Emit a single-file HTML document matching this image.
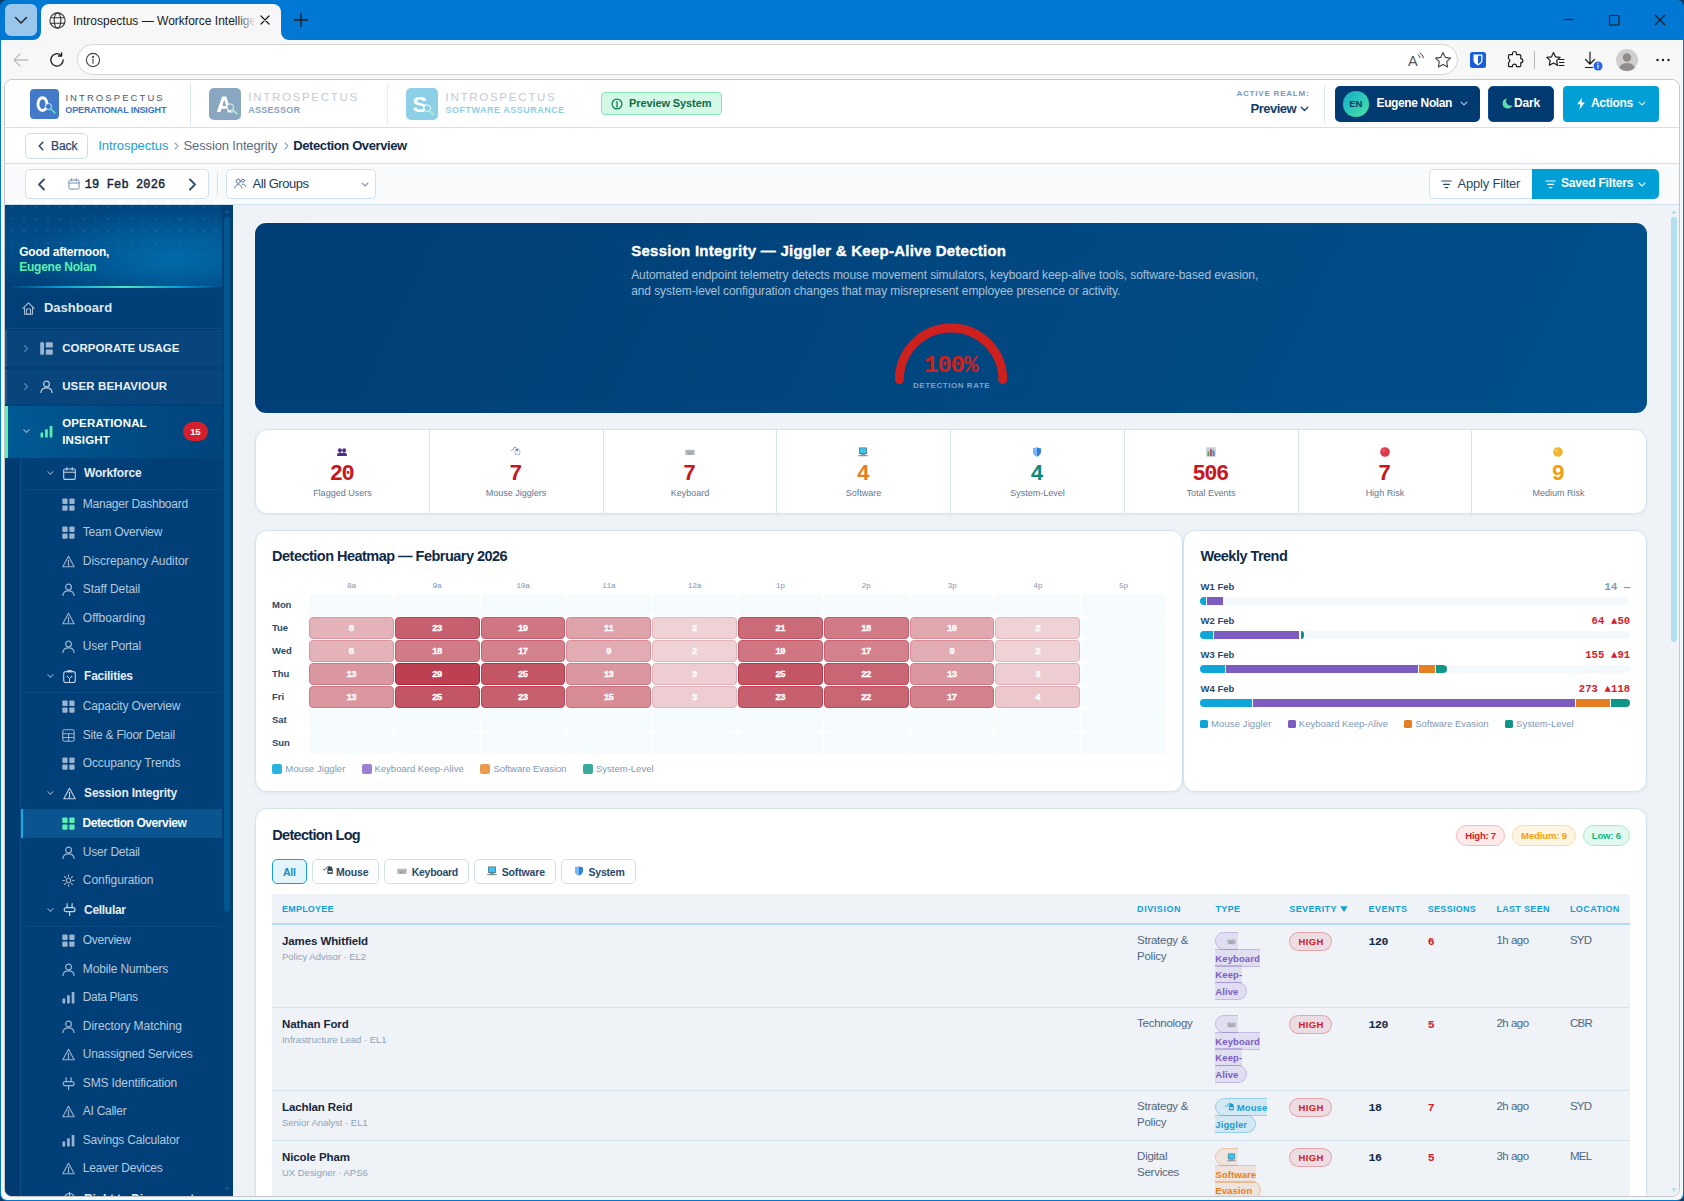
<!DOCTYPE html>
<html><head><meta charset="utf-8"><title>Introspectus</title>
<style>
*{box-sizing:border-box;margin:0;padding:0}
html,body{width:1684px;height:1201px;overflow:hidden}
body{font-family:"Liberation Sans",sans-serif;background:#0b3d68;position:relative;color:#1f3a56;font-size:13px}
.mono{font-family:"Liberation Mono",monospace}
.abs{position:absolute}
svg{display:block}
/* browser chrome */
#titlebar{position:absolute;left:0;top:0;width:1684px;height:1201px;background:#0078d4;border-radius:7px}
#toolbar{position:absolute;left:1px;top:40px;width:1682px;height:1160px;background:#f7f7f7;border-radius:0 0 6px 6px}
#tab{position:absolute;left:41px;top:4px;width:240px;height:36px;background:#f7f7f7;border-radius:8px 8px 0 0}
#tabdrop{position:absolute;left:5px;top:4px;width:32px;height:32px;background:#99c7ec;border-radius:6px}
#url{position:absolute;left:77px;top:44px;width:1381px;height:31px;border-radius:16px;background:#fff;border:1px solid #d4d4d4}
#page{position:absolute;left:4px;top:79px;width:1676px;height:1118px;background:#eff3f8;border-radius:8px;border:1px solid #c4c7ca;overflow:hidden}
/* inside page: #pg uses screen coords */
#pg{position:absolute;left:-5px;top:-80px;width:1684px;height:1201px}
#hdr{position:absolute;left:5px;top:80px;width:1674px;height:48px;background:#fff;border-bottom:1px solid #d2e1ee}
#crumb{position:absolute;left:5px;top:128px;width:1674px;height:36px;background:#fff;border-bottom:1px solid #d2e1ee}
#filt{position:absolute;left:5px;top:164px;width:1674px;height:41px;background:#f8fafc;border-bottom:1px solid #d2e1ee}
#side{position:absolute;left:5px;top:205px;width:228px;height:991px;background:#003f77;overflow:hidden}
#main{position:absolute;left:233px;top:205px;width:1446px;height:991px;background:#eff3f8;overflow:hidden}

.t{position:absolute;white-space:nowrap;line-height:1}
.b{font-weight:700}
.tb{font-size:9.500px;font-weight:700;line-height:16.500px;letter-spacing:.1px}
.tb span{padding:2.600px 7.500px 2.600px 0;border-radius:9px;-webkit-box-decoration-break:slice;box-decoration-break:slice}
.tb i.e{display:inline-block;padding-left:10.700px;padding-right:1.900px}.tb i.m{padding-left:8.500px;padding-right:.2px}
</style></head><body>

<div id="titlebar"></div>
<div id="toolbar"></div>
<div id="tabdrop"><svg width="32" height="32" viewBox="0 0 32 32"><path d="M10.5 13.5 L16 19 L21.5 13.5" fill="none" stroke="#1b1b1b" stroke-width="1.4" stroke-linecap="round" stroke-linejoin="round"/></svg></div>
<div id="tab">
 <svg class="abs" style="left:8px;top:8px" width="17" height="17" viewBox="0 0 17 17" fill="none" stroke="#333" stroke-width="1.1"><circle cx="8.5" cy="8.5" r="7.6"/><ellipse cx="8.5" cy="8.5" rx="3.3" ry="7.6"/><path d="M1.5 5.8h14M1.5 11.2h14"/></svg>
 <div class="abs" id="tabtitle" style="left:32px;top:8px;width:186px;height:20px;overflow:hidden;white-space:nowrap;font-size:12px;color:#1b1b1b;line-height:18px">Introspectus — Workforce Intelligence</div>
 <div class="abs" style="left:196px;top:6px;width:22px;height:24px;background:linear-gradient(90deg,rgba(247,247,247,0),#f7f7f7 85%)"></div>
 <svg class="abs" style="left:219px;top:11px" width="10" height="10" viewBox="0 0 10 10"><path d="M1 1L9 9M9 1L1 9" stroke="#1b1b1b" stroke-width="1.2" stroke-linecap="round"/></svg>
</div>
<svg class="abs" style="left:-8px;top:32px;left:33px" width="8" height="8" viewBox="0 0 8 8"><path d="M8 0V8H0A8 8 0 0 0 8 0Z" fill="#f7f7f7"/></svg>
<svg class="abs" style="left:281px;top:32px" width="8" height="8" viewBox="0 0 8 8"><path d="M0 0V8H8A8 8 0 0 1 0 0Z" fill="#f7f7f7"/></svg>
<svg class="abs" style="left:293px;top:12px" width="16" height="16" viewBox="0 0 16 16"><path d="M8 1.5V14.5M1.5 8H14.5" stroke="#1b1b1b" stroke-width="1.3" stroke-linecap="round"/></svg>
<!-- window controls -->
<svg class="abs" style="left:1560px;top:10px" width="110" height="20" viewBox="0 0 110 20" fill="none" stroke="#1b1b1b" stroke-width="1.1"><path d="M3.5 9.5H13.5"/><rect x="49.5" y="5.5" width="9.5" height="9.5" rx="1"/><path d="M95 5L105 15M105 5L95 15"/></svg>
<!-- toolbar icons -->
<svg class="abs" style="left:12px;top:52px" width="18" height="16" viewBox="0 0 18 16" fill="none" stroke="#bdbdbd" stroke-width="1.3" stroke-linecap="round" stroke-linejoin="round"><path d="M16 8H2M8 2L2 8l6 6"/></svg>
<svg class="abs" style="left:48px;top:51px" width="18" height="18" viewBox="0 0 18 18" fill="none" stroke="#1b1b1b" stroke-width="1.3" stroke-linecap="round" stroke-linejoin="round"><path d="M15.2 9a6.2 6.2 0 1 1-2.2-4.8"/><path d="M13.6 1.8v3.2h-3.2" /></svg>
<div id="url">
 <svg class="abs" style="left:7px;top:7px" width="16" height="16" viewBox="0 0 16 16" fill="none" stroke="#444" stroke-width="1.1"><circle cx="8" cy="8" r="6.6"/><path d="M8 7.2v4" stroke-linecap="round"/><circle cx="8" cy="4.9" r=".5" fill="#444"/></svg>
 <div class="abs" style="left:1330px;top:6px;font-size:14.500px;color:#555;line-height:20px">A</div>
 <svg class="abs" style="left:1338.500px;top:7px" width="8" height="10" viewBox="0 0 8 10" fill="none" stroke="#444" stroke-width="1" stroke-linecap="round"><path d="M1 2.5a4 4 0 0 1 2 3"/><path d="M3 .8a7 7 0 0 1 3.5 5"/></svg>
 <svg class="abs" style="left:1356px;top:6px" width="18" height="18" viewBox="0 0 18 18" fill="none" stroke="#444" stroke-width="1.1" stroke-linejoin="round"><path d="M9 1.6l2.3 4.8 5.2.7-3.8 3.6.9 5.2L9 13.4l-4.6 2.5.9-5.2L1.500 7.100l5.200-.7z"/></svg>
</div>
<svg class="abs" style="left:1470px;top:52px" width="16" height="16" viewBox="0 0 16 16"><rect width="16" height="16" rx="2.5" fill="#175ddc"/><path d="M3.500 2.500h9v5.800c0 2.500-2.600 4.300-4.500 5.100-1.900-.8-4.500-2.600-4.500-5.100z" fill="#fff"/><path d="M8 3.800h3.200v4.500c0 1.600-1.700 2.900-3.200 3.600z" fill="#175ddc"/></svg>
<svg class="abs" style="left:1505px;top:50px" width="20" height="20" viewBox="0 0 20 20" fill="none" stroke="#1b1b1b" stroke-width="1.2" stroke-linejoin="round"><path d="M7.500 3.500a2 2 0 0 1 4 0v1.200h3.300a1 1 0 0 1 1 1v3a2 2 0 0 1 0 4v3a1 1 0 0 1-1 1h-3.300v-.6a2 2 0 0 0-4 0v.6H4.500a1 1 0 0 1-1-1v-3.200a2 2 0 0 0 0-3.800V5.700a1 1 0 0 1 1-1h3z"/></svg>
<div class="abs" style="left:1534px;top:51px;width:1px;height:18px;background:#b8b8b8"></div>
<svg class="abs" style="left:1545px;top:50px" width="22" height="20" viewBox="0 0 22 20" fill="none" stroke="#1b1b1b" stroke-width="1.2" stroke-linejoin="round" stroke-linecap="round"><path d="M8.500 2.500l2 4.300 4.600.6-3.400 3.200.8 4.700-4-2.300-4.100 2.300.8-4.700L1.800 7.400l4.700-.6z"/><path d="M14 9.500h5M14.500 12.500h4.500M14 15.500h5" stroke-width="1.1"/></svg>
<svg class="abs" style="left:1582px;top:50px" width="24" height="22" viewBox="0 0 24 22" fill="none" stroke="#1b1b1b" stroke-width="1.2" stroke-linecap="round" stroke-linejoin="round"><path d="M8 2v12M3.500 9.500L8 14l4.500-4.500M3.500 17.500h7"/><circle cx="16" cy="16" r="4.500" fill="#2563eb" stroke="none"/><path d="M16 15v3" stroke="#fff" stroke-width="1.2"/><circle cx="16" cy="13.300" r=".7" fill="#fff" stroke="none"/></svg>
<svg class="abs" style="left:1616px;top:49px" width="22" height="22" viewBox="0 0 22 22"><defs><clipPath id="pc"><circle cx="11" cy="11" r="11"/></clipPath></defs><circle cx="11" cy="11" r="11" fill="#d0cecc"/><g clip-path="url(#pc)" fill="#8f8c89"><circle cx="11" cy="8.500" r="4.200"/><ellipse cx="11" cy="20" rx="8" ry="6"/></g></svg>
<svg class="abs" style="left:1655px;top:58px" width="16" height="4" viewBox="0 0 16 4" fill="#1b1b1b"><circle cx="2.500" cy="2" r="1.200"/><circle cx="8" cy="2" r="1.200"/><circle cx="13.500" cy="2" r="1.200"/></svg>
<div id="page"><div id="pg">
<div id="hdr">
<!--HDR-->
</div>
<div id="crumb">
<!--CRUMB-->
</div>
<div id="filt">
<!--FILT-->
</div>
<div id="side">
<!--SIDE-->
</div>
<div id="main">
<!--MAIN-->
</div>
<!--HDRC-->

<!-- logo 1 -->
<div class="abs" style="left:29.5px;top:89px;width:29.5px;height:29.5px;border-radius:4px;background:#4479c9"></div>
<svg class="abs" style="left:29.5px;top:89px" width="29.5" height="29.5" viewBox="0 0 30 30" fill="none"><ellipse cx="12.700" cy="15.400" rx="4.600" ry="6.500" stroke="#fff" stroke-width="2.900"/><circle cx="18.800" cy="17.800" r="3.100" fill="#4479c9" stroke="#e8eef8" stroke-width="1"/><path d="M21.200 20.200L25.300 24.200" stroke="#4fe3a8" stroke-width="1.800" stroke-linecap="round"/></svg>
<div class="t" style="left:65.4px;top:93.3px;font-size:9.500px;letter-spacing:2.080px;color:#4a5a74">INTROSPECTUS</div>
<div class="t b" style="left:65.3px;top:105.8px;font-size:9px;letter-spacing:-0.14px;color:#3a74c8">OPERATIONAL INSIGHT</div>
<div class="abs" style="left:190px;top:83px;width:1px;height:43px;background:#dbe7f1"></div>
<!-- logo 2 -->
<div class="abs" style="left:209px;top:87.500px;width:32px;height:32px;border-radius:5px;background:#8aa7c2"></div>
<svg class="abs" style="left:209px;top:87.500px" width="32" height="32" viewBox="0 0 32 32" fill="none"><path d="M7.800 24L13.200 8.500h4L22.600 24h-3.700l-1-3.300h-5.500l-1 3.300zM13.300 17.900h3.800l-1.900-6.300z" fill="#fff"/><circle cx="21.300" cy="19.200" r="3.300" fill="#8aa7c2" stroke="#eef3f8" stroke-width="1"/><path d="M18.500 24h5.500" stroke="#eef3f8" stroke-width="1"/><path d="M23.900 21.800L28 25.800" stroke="#a5efd0" stroke-width="1.800" stroke-linecap="round"/></svg>
<div class="t" style="left:248.300px;top:92.200px;font-size:11.500px;letter-spacing:1.700px;color:#c3cad7">INTROSPECTUS</div>
<div class="t b" style="left:248.300px;top:105.500px;font-size:9px;letter-spacing:.25px;color:#86a3c0">ASSESSOR</div>
<div class="abs" style="left:387px;top:83px;width:1px;height:43px;background:#e6eef5"></div>
<!-- logo 3 -->
<div class="abs" style="left:406px;top:87.500px;width:32px;height:32px;border-radius:5px;background:#8ecfe8"></div>
<svg class="abs" style="left:406px;top:87.500px" width="32" height="32" viewBox="0 0 32 32" fill="none"><text x="6.500" y="24" font-family="Liberation Sans" font-weight="700" font-size="22" fill="#fff">S</text><circle cx="21.300" cy="20.200" r="3.300" fill="#8ecfe8" stroke="#f2fafd" stroke-width="1"/><path d="M23.900 22.800L27.500 26.300" stroke="#a5efd0" stroke-width="1.800" stroke-linecap="round"/></svg>
<div class="t" style="left:445.600px;top:92.200px;font-size:11.500px;letter-spacing:1.720px;color:#c3cad7">INTROSPECTUS</div>
<div class="t b" style="left:445.600px;top:105.800px;font-size:9px;letter-spacing:.5px;color:#8ecfe8">SOFTWARE ASSURANCE</div>
<!-- preview badge -->
<div class="abs" style="left:601px;top:92px;width:121px;height:23px;border-radius:4px;background:#d3f8e6;border:1px solid #86e5b9"></div>
<svg class="abs" style="left:611px;top:97.500px" width="12" height="12" viewBox="0 0 12 12" fill="none" stroke="#0e7a50" stroke-width="1.200"><circle cx="6" cy="6" r="4.900"/><path d="M6 3.500v3.500" stroke-linecap="round"/><circle cx="6" cy="8.600" r=".4" fill="#0e7a50"/></svg>
<div class="t b" style="left:629px;top:98px;font-size:11px;letter-spacing:-.1px;color:#0e6b47">Preview System</div>
<!-- realm -->
<div class="t b" style="right:374.500px;top:89.500px;font-size:8px;letter-spacing:.8px;color:#7d99b7">ACTIVE REALM:</div>
<div class="t b" style="left:1250.500px;top:102px;font-size:13px;letter-spacing:-.5px;color:#123e6b">Preview</div>
<svg class="abs" style="left:1300px;top:105.500px" width="9" height="6" viewBox="0 0 9 6" fill="none" stroke="#123e6b" stroke-width="1.300" stroke-linecap="round" stroke-linejoin="round"><path d="M1.200 1.200L4.500 4.500L7.800 1.200"/></svg>
<div class="abs" style="left:1324px;top:85px;width:1px;height:38px;background:#dbe7f1"></div>
<!-- user btn -->
<div class="abs" style="left:1335px;top:86px;width:145px;height:36px;border-radius:5px;background:#003a70"></div>
<div class="abs" style="left:1343px;top:91px;width:25.600px;height:25.600px;border-radius:50%;background:linear-gradient(135deg,#12abc9,#49e6a6)"></div>
<div class="t b" style="left:1349.300px;top:99.200px;font-size:9.500px;letter-spacing:-.2px;color:#0d3a66">EN</div>
<div class="t b" style="left:1376.500px;top:97.300px;font-size:12px;letter-spacing:-.37px;color:#fff">Eugene Nolan</div>
<svg class="abs" style="left:1459.500px;top:100.500px" width="8" height="5.300" viewBox="0 0 9 6" fill="none" stroke="#b9cbe0" stroke-width="1.200" stroke-linecap="round" stroke-linejoin="round"><path d="M1.200 1.200L4.500 4.500L7.800 1.200"/></svg>
<!-- dark btn -->
<div class="abs" style="left:1488px;top:86px;width:66px;height:36px;border-radius:5px;background:#003a70;border:1px solid #0c4d8c"></div>
<svg class="abs" style="left:1502px;top:98px" width="11" height="11" viewBox="0 0 11 11"><path d="M5 .6A5 5 0 1 0 10.400 7 4.300 4.300 0 0 1 5 .6Z" fill="#57e0a9"/></svg>
<div class="t b" style="left:1514px;top:97.300px;font-size:12px;letter-spacing:-.15px;color:#fff">Dark</div>
<!-- actions btn -->
<div class="abs" style="left:1563px;top:86px;width:96px;height:36px;border-radius:4px;background:#00a0d6"></div>
<svg class="abs" style="left:1576px;top:97px" width="10" height="13" viewBox="0 0 10 13"><path d="M6.300 .5L1.200 7.300h3.300L3.500 12.500 8.800 5.500H5.400z" fill="#fff"/></svg>
<div class="t b" style="left:1591px;top:97.300px;font-size:12px;letter-spacing:-.3px;color:#fff">Actions</div>
<svg class="abs" style="left:1637.500px;top:100.500px" width="8" height="5.300" viewBox="0 0 9 6" fill="none" stroke="#e6f5fb" stroke-width="1.200" stroke-linecap="round" stroke-linejoin="round"><path d="M1.200 1.200L4.500 4.500L7.800 1.200"/></svg>
<!--/HDRC-->
<!--CRUMBC-->
<div class="abs" style="left:25px;top:133px;width:62.500px;height:25.600px;border-radius:5px;background:#fff;border:1px solid #cfdcea"></div>
<svg class="abs" style="left:38px;top:141px" width="6" height="10" viewBox="0 0 6 10" fill="none" stroke="#2a4a6b" stroke-width="1.500" stroke-linecap="round" stroke-linejoin="round"><path d="M4.800 1.200L1.200 5L4.800 8.800"/></svg>
<div class="t" style="left:51px;top:139.800px;font-size:12px;letter-spacing:-.1px;color:#2a4a6b;-webkit-text-stroke:.25px #2a4a6b">Back</div>
<div class="t" style="left:98.300px;top:139px;font-size:13px;letter-spacing:-.06px;color:#1a9fd4">Introspectus</div>
<svg class="abs" style="left:174px;top:141.700px" width="5" height="8" viewBox="0 0 5 8" fill="none" stroke="#8ea3b8" stroke-width="1.100" stroke-linecap="round" stroke-linejoin="round"><path d="M1 1L4 4L1 7"/></svg>
<div class="t" style="left:183.600px;top:139px;font-size:13px;letter-spacing:-.14px;color:#5a6d83">Session Integrity</div>
<svg class="abs" style="left:283.500px;top:141.700px" width="5" height="8" viewBox="0 0 5 8" fill="none" stroke="#8ea3b8" stroke-width="1.100" stroke-linecap="round" stroke-linejoin="round"><path d="M1 1L4 4L1 7"/></svg>
<div class="t b" style="left:293.200px;top:139px;font-size:13px;letter-spacing:-.39px;color:#0f2a47">Detection Overview</div>
<!-- filter row -->
<div class="abs" style="left:25px;top:169px;width:183.500px;height:29.700px;border-radius:5px;background:#fff;border:1px solid #d2dfec"></div>
<svg class="abs" style="left:36.500px;top:177.500px" width="9" height="13" viewBox="0 0 9 13" fill="none" stroke="#33506e" stroke-width="1.900" stroke-linecap="round" stroke-linejoin="round"><path d="M7 1.500L2 6.500L7 11.500"/></svg>
<svg class="abs" style="left:67.800px;top:178px" width="12" height="12" viewBox="0 0 13 13" fill="none" stroke="#6a88a8" stroke-width="1" stroke-linejoin="round"><rect x="1" y="2.200" width="11" height="9.800" rx="1.300"/><path d="M1 5.400h11M4 .7v2.600M9 .7v2.600" stroke-linecap="round"/></svg>
<div class="t mono" style="left:84.800px;top:179px;font-size:12px;letter-spacing:.12px;color:#16273b;-webkit-text-stroke:.45px #16273b">19 Feb 2026</div>
<svg class="abs" style="left:187.500px;top:177.500px" width="9" height="13" viewBox="0 0 9 13" fill="none" stroke="#33506e" stroke-width="1.900" stroke-linecap="round" stroke-linejoin="round"><path d="M2 1.500L7 6.500L2 11.500"/></svg>
<div class="abs" style="left:217px;top:173px;width:1px;height:21.500px;background:#d2dfec"></div>
<div class="abs" style="left:226px;top:169px;width:149.500px;height:29.700px;border-radius:5px;background:#fff;border:1px solid #d2dfec"></div>
<svg class="abs" style="left:234px;top:178px" width="12" height="11" viewBox="0 0 12 11" fill="none" stroke="#5b7896" stroke-width="1" stroke-linecap="round"><circle cx="4.300" cy="3.300" r="2.100"/><path d="M.7 10.200c.2-2.300 1.700-3.500 3.600-3.500s3.400 1.200 3.600 3.500"/><circle cx="9" cy="2.700" r="1.500"/><path d="M8.200 6.200c1.800-.4 3.100.6 3.300 2.300"/></svg>
<div class="t" style="left:252.500px;top:176.800px;font-size:13px;letter-spacing:-.46px;color:#1f3a56">All Groups</div>
<svg class="abs" style="left:360.500px;top:181.500px" width="8" height="5" viewBox="0 0 8 5" fill="none" stroke="#7f97b0" stroke-width="1.100" stroke-linecap="round" stroke-linejoin="round"><path d="M1 1L4 4L7 1"/></svg>
<div class="abs" style="left:1428.500px;top:169px;width:104px;height:29.700px;border-radius:5px 0 0 5px;background:#fff;border:1px solid #d2dfec"></div>
<svg class="abs" style="left:1441px;top:180px" width="11" height="9" viewBox="0 0 11 9" fill="none" stroke="#2a4a6b" stroke-width="1.200" stroke-linecap="round"><path d="M.8 1h9.400M2.500 4.300h6M4.200 7.600h2.600"/></svg>
<div class="t" style="left:1457.500px;top:176.800px;font-size:13px;letter-spacing:-.19px;color:#2a4a6b">Apply Filter</div>
<div class="abs" style="left:1532px;top:169px;width:127px;height:29.700px;border-radius:0 5px 5px 0;background:#00a0d6"></div>
<svg class="abs" style="left:1545px;top:180px" width="11" height="9" viewBox="0 0 11 9" fill="none" stroke="#fff" stroke-width="1.200" stroke-linecap="round"><path d="M.8 1h9.400M2.500 4.300h6M4.200 7.600h2.600"/></svg>
<div class="t b" style="left:1561px;top:177.200px;font-size:12px;letter-spacing:-.2px;color:#fff">Saved Filters</div>
<svg class="abs" style="left:1638px;top:181.500px" width="8" height="5" viewBox="0 0 8 5" fill="none" stroke="#e6f5fb" stroke-width="1.100" stroke-linecap="round" stroke-linejoin="round"><path d="M1 1L4 4L7 1"/></svg>
<!--/CRUMBC-->
<!--SIDEC-->
<div class="abs" style="left:5px;top:205px;width:217px;height:82px;background:radial-gradient(ellipse 150px 55px at 78% 66%,rgba(0,108,170,.95) 0%,rgba(0,108,170,0) 100%),linear-gradient(180deg,#00447e 0%,#004d88 45%,#004a84 75%,#003f77 100%)"></div>
<div class="abs" style="left:5px;top:205px;width:217px;height:70px;background-image:radial-gradient(circle,rgba(120,200,230,.13) .8px,rgba(0,0,0,0) 1.200px);background-size:12px 12px;background-position:1px -4px;-webkit-mask-image:linear-gradient(180deg,#000 40%,transparent)"></div>
<div class="abs" style="left:222px;top:205px;width:11px;height:991px;background:#003f77"></div>
<div class="abs" style="left:224.300px;top:217px;width:5.700px;height:695px;border-radius:3px;background:#00578f"></div>
<svg class="abs" style="left:224px;top:209px" width="6" height="4" viewBox="0 0 6 4"><path d="M3 .3L5.800 3.800H.2z" fill="#0a5a94"/></svg>
<svg class="abs" style="left:224px;top:1186.500px" width="6" height="4" viewBox="0 0 6 4"><path d="M3 3.700L5.800 .2H.2z" fill="#0a5a94"/></svg>
<div class="t b" style="left:19.2px;top:246.3px;font-size:12px;letter-spacing:-0.22px;color:#fff">Good afternoon,</div>
<div class="t b" style="left:19.2px;top:261.3px;font-size:12px;letter-spacing:-0.23px;color:#5ef0b0">Eugene Nolan</div>
<div class="abs" style="left:8px;top:285.500px;width:213px;height:2px;background:linear-gradient(90deg,rgba(0,160,214,0) 0%,#00a0d6 25%,#4fe3c0 55%,#00a0d6 80%,rgba(0,160,214,0) 100%)"></div>
<svg class="abs" style="left:22.2px;top:302.1px" width="13" height="13" viewBox="0 0 13 13" fill="none" stroke="#a8bed6" stroke-width="1.100" stroke-linejoin="round" stroke-linecap="round"><path d="M.8 6.300L6.500 .9l5.700 5.400"/><path d="M2.500 5.500v6.700h8V5.500"/><rect x="4.500" y="7" width="4" height="5.200" rx=".8"/></svg>
<div class="t b" style="left:43.9px;top:301.3px;font-size:13px;letter-spacing:0.04px;color:#dfe9f3">Dashboard</div>
<div class="abs" style="left:5px;top:328px;width:217px;height:1px;background:#0d4c84"></div>
<div class="abs" style="left:5px;top:329.500px;width:217px;height:37px;background:#08457c"></div><div class="abs" style="left:5px;top:329.500px;width:2px;height:37px;background:#265788"></div>
<svg class="abs" style="left:24.3px;top:344.9px" width="4.2" height="7" viewBox="0 0 6 10" fill="none" stroke="#7f9cbc" stroke-width="1.500" stroke-linecap="round" stroke-linejoin="round"><path d="M1 1L5 5L1 9"/></svg>
<svg class="abs" style="left:40.0px;top:341.9px" width="13" height="13" viewBox="0 0 13 13" fill="#9bb3cf"><rect x=".2" y=".3" width="3.800" height="12.400" rx=".8"/><rect x="5.800" y=".3" width="7" height="5.200" rx=".8"/><rect x="5.800" y="7.500" width="7" height="5.200" rx=".8"/></svg>
<div class="t b" style="left:62.2px;top:343.3px;font-size:11.5px;letter-spacing:0.04px;color:#e9f0f8">CORPORATE USAGE</div>
<div class="abs" style="left:5px;top:368.500px;width:217px;height:35px;background:#08457c"></div><div class="abs" style="left:5px;top:368.500px;width:2px;height:35px;background:#265788"></div>
<svg class="abs" style="left:24.3px;top:382.5px" width="4.2" height="7" viewBox="0 0 6 10" fill="none" stroke="#7f9cbc" stroke-width="1.500" stroke-linecap="round" stroke-linejoin="round"><path d="M1 1L5 5L1 9"/></svg>
<svg class="abs" style="left:40.0px;top:379.5px" width="13" height="13" viewBox="0 0 13 13" fill="none" stroke="#b9cce0" stroke-width="1.200" stroke-linecap="round"><circle cx="6.500" cy="4" r="2.900"/><path d="M.9 12.600c.3-3.300 2.700-4.700 5.600-4.700s5.300 1.400 5.600 4.700"/></svg>
<div class="t b" style="left:62.2px;top:381.4px;font-size:11.5px;letter-spacing:0.13px;color:#e9f0f8">USER BEHAVIOUR</div>
<div class="abs" style="left:5px;top:405.800px;width:217px;height:52px;background:linear-gradient(90deg,#005a94 0%,#004c84 55%,#00447c 100%)"></div><div class="abs" style="left:5px;top:405.800px;width:3px;height:52px;background:#5cf0b0"></div>
<svg class="abs" style="left:23.0px;top:429.4px" width="7" height="4.2" viewBox="0 0 10 6" fill="none" stroke="#8fb0d0" stroke-width="1.500" stroke-linecap="round" stroke-linejoin="round"><path d="M1 1L5 5L9 1"/></svg>
<svg class="abs" style="left:40.0px;top:425.0px" width="13" height="13" viewBox="0 0 13 13" fill="#5cf0b0"><rect x=".5" y="7.500" width="2.700" height="5" rx=".4"/><rect x="5.100" y="4.300" width="2.700" height="8.200" rx=".4"/><rect x="9.700" y="1" width="2.700" height="11.500" rx=".4"/></svg>
<div class="t b" style="left:62.2px;top:418.4px;font-size:11.5px;letter-spacing:0.16px;color:#fff">OPERATIONAL</div>
<div class="t b" style="left:62.2px;top:435.4px;font-size:11.5px;letter-spacing:0.16px;color:#fff">INSIGHT</div>
<div class="abs" style="left:183px;top:422px;width:25px;height:18.700px;border-radius:10px;background:#d4202a"></div>
<div class="t b" style="left:190.2px;top:426.8px;font-size:9.5px;letter-spacing:-0.3px;color:#fff">15</div>
<div class="abs" style="left:5px;top:458px;width:15px;height:738px;background:#003b71"></div>
<div class="abs" style="left:19.500px;top:458px;width:1.500px;height:738px;background:#0a4f86"></div>
<svg class="abs" style="left:47.0px;top:471.4px" width="6.8" height="4.1" viewBox="0 0 10 6" fill="none" stroke="#7f9cbc" stroke-width="1.500" stroke-linecap="round" stroke-linejoin="round"><path d="M1 1L5 5L9 1"/></svg>
<svg class="abs" style="left:62.9px;top:467.0px" width="13" height="13" viewBox="0 0 13 13" fill="none" stroke="#c3d3e5" stroke-width="1.100" stroke-linejoin="round" stroke-linecap="round"><rect x=".7" y="2" width="11.600" height="10.400" rx="1.300"/><path d="M.7 5.300h11.600M3.800 .6v2.600M9.200 .6v2.600"/></svg>
<div class="t b" style="left:84.1px;top:467.2px;font-size:12px;letter-spacing:-0.205px;color:#e3edf7">Workforce</div>
<div class="abs" style="left:23px;top:489.4px;width:199px;height:1px;background:#0a4a82"></div>
<svg class="abs" style="left:61.7px;top:497.9px" width="13" height="13" viewBox="0 0 13 13" fill="#9bb3cf"><rect x=".3" y=".6" width="5.300" height="5.300" rx="1"/><rect x="7.300" y=".6" width="5.300" height="5.300" rx="1"/><rect x=".3" y="7.400" width="5.300" height="5.300" rx="1"/><rect x="7.300" y="7.400" width="5.300" height="5.300" rx="1"/></svg>
<div class="t" style="left:82.8px;top:498.2px;font-size:12px;letter-spacing:-0.255px;color:#b5c9de">Manager Dashboard</div>
<svg class="abs" style="left:61.7px;top:526.1px" width="13" height="13" viewBox="0 0 13 13" fill="#9bb3cf"><rect x=".3" y=".6" width="5.300" height="5.300" rx="1"/><rect x="7.300" y=".6" width="5.300" height="5.300" rx="1"/><rect x=".3" y="7.400" width="5.300" height="5.300" rx="1"/><rect x="7.300" y="7.400" width="5.300" height="5.300" rx="1"/></svg>
<div class="t" style="left:82.8px;top:526.4px;font-size:12px;letter-spacing:-0.255px;color:#b5c9de">Team Overview</div>
<svg class="abs" style="left:61.7px;top:554.8px" width="13" height="13" viewBox="0 0 13 13" fill="none" stroke="#9bb3cf" stroke-width="1.100" stroke-linejoin="round" stroke-linecap="round"><path d="M6.500 1.300L12.200 11.700H.8z"/><path d="M6.500 5.200v3.300"/><circle cx="6.500" cy="10" r=".35" fill="#9bb3cf"/></svg>
<div class="t" style="left:82.8px;top:555.1px;font-size:12px;letter-spacing:-0.05px;color:#b5c9de">Discrepancy Auditor</div>
<svg class="abs" style="left:61.7px;top:583.1px" width="13" height="13" viewBox="0 0 13 13" fill="none" stroke="#9bb3cf" stroke-width="1.200" stroke-linecap="round"><circle cx="6.500" cy="4" r="2.900"/><path d="M.9 12.600c.3-3.300 2.700-4.700 5.600-4.700s5.300 1.400 5.600 4.700"/></svg>
<div class="t" style="left:82.8px;top:583.4px;font-size:12px;letter-spacing:-0.094px;color:#b5c9de">Staff Detail</div>
<svg class="abs" style="left:61.7px;top:611.8px" width="13" height="13" viewBox="0 0 13 13" fill="none" stroke="#9bb3cf" stroke-width="1.100" stroke-linejoin="round" stroke-linecap="round"><path d="M6.500 1.300L12.200 11.700H.8z"/><path d="M6.500 5.200v3.300"/><circle cx="6.500" cy="10" r=".35" fill="#9bb3cf"/></svg>
<div class="t" style="left:82.8px;top:612.1px;font-size:12px;letter-spacing:0.0px;color:#b5c9de">Offboarding</div>
<svg class="abs" style="left:61.7px;top:640.1px" width="13" height="13" viewBox="0 0 13 13" fill="none" stroke="#9bb3cf" stroke-width="1.200" stroke-linecap="round"><circle cx="6.500" cy="4" r="2.900"/><path d="M.9 12.600c.3-3.300 2.700-4.700 5.600-4.700s5.300 1.400 5.600 4.700"/></svg>
<div class="t" style="left:82.8px;top:640.4px;font-size:12px;letter-spacing:-0.165px;color:#b5c9de">User Portal</div>
<svg class="abs" style="left:47.0px;top:674.3px" width="6.8" height="4.1" viewBox="0 0 10 6" fill="none" stroke="#7f9cbc" stroke-width="1.500" stroke-linecap="round" stroke-linejoin="round"><path d="M1 1L5 5L9 1"/></svg>
<svg class="abs" style="left:62.9px;top:669.7px" width="13" height="13" viewBox="0 0 13 13" fill="none" stroke="#c3d3e5" stroke-width="1.100" stroke-linejoin="round" stroke-linecap="round"><rect x=".7" y="1.600" width="11.600" height="11" rx="2"/><path d="M3.800 1.600L5 .6h3l1.200 1z"/><circle cx="4.400" cy="6.500" r=".8" fill="#c3d3e5" stroke="none"/><circle cx="8.600" cy="6.500" r=".8" fill="#c3d3e5" stroke="none"/><path d="M4.400 6.500L6.500 8.600L8.600 6.500M6.500 8.600v3" stroke-width=".9"/></svg>
<div class="t b" style="left:84.1px;top:670.1px;font-size:12px;letter-spacing:-0.269px;color:#e3edf7">Facilities</div>
<div class="abs" style="left:23px;top:692.3px;width:199px;height:1px;background:#0a4a82"></div>
<svg class="abs" style="left:61.7px;top:699.8px" width="13" height="13" viewBox="0 0 13 13" fill="#9bb3cf"><rect x=".3" y=".6" width="5.300" height="5.300" rx="1"/><rect x="7.300" y=".6" width="5.300" height="5.300" rx="1"/><rect x=".3" y="7.400" width="5.300" height="5.300" rx="1"/><rect x="7.300" y="7.400" width="5.300" height="5.300" rx="1"/></svg>
<div class="t" style="left:82.8px;top:700.1px;font-size:12px;letter-spacing:-0.147px;color:#b5c9de">Capacity Overview</div>
<svg class="abs" style="left:61.7px;top:728.8px" width="13" height="13" viewBox="0 0 13 13" fill="none" stroke="#9bb3cf" stroke-width="1.100" stroke-linejoin="round"><rect x=".8" y=".8" width="11.400" height="11.400" rx="1.600"/><path d="M.8 4.800h11.400M.8 8.500h11.400M6.500 4.800v7.400"/></svg>
<div class="t" style="left:82.8px;top:729.1px;font-size:12px;letter-spacing:-0.243px;color:#b5c9de">Site &amp; Floor Detail</div>
<svg class="abs" style="left:61.7px;top:757.1px" width="13" height="13" viewBox="0 0 13 13" fill="#9bb3cf"><rect x=".3" y=".6" width="5.300" height="5.300" rx="1"/><rect x="7.300" y=".6" width="5.300" height="5.300" rx="1"/><rect x=".3" y="7.400" width="5.300" height="5.300" rx="1"/><rect x="7.300" y="7.400" width="5.300" height="5.300" rx="1"/></svg>
<div class="t" style="left:82.8px;top:757.4px;font-size:12px;letter-spacing:-0.159px;color:#b5c9de">Occupancy Trends</div>
<svg class="abs" style="left:47.0px;top:791.3px" width="6.8" height="4.1" viewBox="0 0 10 6" fill="none" stroke="#7f9cbc" stroke-width="1.500" stroke-linecap="round" stroke-linejoin="round"><path d="M1 1L5 5L9 1"/></svg>
<svg class="abs" style="left:62.9px;top:786.9px" width="13" height="13" viewBox="0 0 13 13" fill="none" stroke="#c3d3e5" stroke-width="1.100" stroke-linejoin="round" stroke-linecap="round"><path d="M6.500 1.300L12.200 11.700H.8z"/><path d="M6.500 5.200v3.300"/><circle cx="6.500" cy="10" r=".35" fill="#c3d3e5"/></svg>
<div class="t b" style="left:84.1px;top:787.1px;font-size:12px;letter-spacing:-0.218px;color:#e3edf7">Session Integrity</div>
<div class="abs" style="left:23px;top:809.3px;width:199px;height:1px;background:#0a4a82"></div>
<div class="abs" style="left:20.700px;top:809.0px;width:201.300px;height:28.700px;background:#0a5590"></div><div class="abs" style="left:20.700px;top:809.0px;width:2.600px;height:28.700px;background:#1aa8e0"></div>
<svg class="abs" style="left:61.5px;top:817.1px" width="13" height="13" viewBox="0 0 13 13" fill="#5cf0b0"><rect x=".3" y=".6" width="5.300" height="5.300" rx="1"/><rect x="7.300" y=".6" width="5.300" height="5.300" rx="1"/><rect x=".3" y="7.400" width="5.300" height="5.300" rx="1"/><rect x="7.300" y="7.400" width="5.300" height="5.300" rx="1"/></svg>
<div class="t b" style="left:82.5px;top:817.4px;font-size:12px;letter-spacing:-0.41px;color:#fff">Detection Overview</div>
<svg class="abs" style="left:61.7px;top:845.8px" width="13" height="13" viewBox="0 0 13 13" fill="none" stroke="#9bb3cf" stroke-width="1.200" stroke-linecap="round"><circle cx="6.500" cy="4" r="2.900"/><path d="M.9 12.600c.3-3.300 2.700-4.700 5.600-4.700s5.300 1.400 5.600 4.700"/></svg>
<div class="t" style="left:82.8px;top:846.1px;font-size:12px;letter-spacing:-0.215px;color:#b5c9de">User Detail</div>
<svg class="abs" style="left:61.7px;top:874.1px" width="13" height="13" viewBox="0 0 13 13" fill="none" stroke="#9bb3cf" stroke-width="1.100" stroke-linecap="round"><circle cx="6.500" cy="6.500" r="2.200"/><path d="M6.500 .8v1.700M6.500 10.500v1.700M.8 6.500h1.700M10.500 6.500h1.700M2.500 2.500l1.200 1.200M9.300 9.300l1.200 1.200M2.500 10.500l1.200-1.200M9.300 3.700l1.200-1.200"/></svg>
<div class="t" style="left:82.8px;top:874.4px;font-size:12px;letter-spacing:-0.055px;color:#b5c9de">Configuration</div>
<svg class="abs" style="left:47.0px;top:908.3px" width="6.8" height="4.1" viewBox="0 0 10 6" fill="none" stroke="#7f9cbc" stroke-width="1.500" stroke-linecap="round" stroke-linejoin="round"><path d="M1 1L5 5L9 1"/></svg>
<svg class="abs" style="left:62.9px;top:902.9px" width="13" height="13" viewBox="0 0 13 13" fill="none" stroke="#c3d3e5" stroke-width="1.200" stroke-linecap="round" stroke-linejoin="round"><path d="M4.100 .7v4M9.100 .7v4"/><rect x="1.200" y="4.700" width="10.800" height="4" rx="2"/><path d="M6.600 8.700v4"/></svg>
<div class="t b" style="left:84.1px;top:904.1px;font-size:12px;letter-spacing:-0.309px;color:#e3edf7">Cellular</div>
<div class="abs" style="left:23px;top:926.3px;width:199px;height:1px;background:#0a4a82"></div>
<svg class="abs" style="left:61.7px;top:933.8px" width="13" height="13" viewBox="0 0 13 13" fill="#9bb3cf"><rect x=".3" y=".6" width="5.300" height="5.300" rx="1"/><rect x="7.300" y=".6" width="5.300" height="5.300" rx="1"/><rect x=".3" y="7.400" width="5.300" height="5.300" rx="1"/><rect x="7.300" y="7.400" width="5.300" height="5.300" rx="1"/></svg>
<div class="t" style="left:82.8px;top:934.1px;font-size:12px;letter-spacing:-0.269px;color:#b5c9de">Overview</div>
<svg class="abs" style="left:61.7px;top:962.8px" width="13" height="13" viewBox="0 0 13 13" fill="none" stroke="#9bb3cf" stroke-width="1.200" stroke-linecap="round"><circle cx="6.500" cy="4" r="2.900"/><path d="M.9 12.600c.3-3.300 2.700-4.700 5.600-4.700s5.300 1.400 5.600 4.700"/></svg>
<div class="t" style="left:82.8px;top:963.1px;font-size:12px;letter-spacing:-0.146px;color:#b5c9de">Mobile Numbers</div>
<svg class="abs" style="left:61.7px;top:991.1px" width="13" height="13" viewBox="0 0 13 13" fill="#9bb3cf"><rect x=".5" y="7.500" width="2.700" height="5" rx=".4"/><rect x="5.100" y="4.300" width="2.700" height="8.200" rx=".4"/><rect x="9.700" y="1" width="2.700" height="11.500" rx=".4"/></svg>
<div class="t" style="left:82.8px;top:991.4px;font-size:12px;letter-spacing:-0.379px;color:#b5c9de">Data Plans</div>
<svg class="abs" style="left:61.7px;top:1019.8px" width="13" height="13" viewBox="0 0 13 13" fill="none" stroke="#9bb3cf" stroke-width="1.200" stroke-linecap="round"><circle cx="6.500" cy="4" r="2.900"/><path d="M.9 12.600c.3-3.300 2.700-4.700 5.600-4.700s5.300 1.400 5.600 4.700"/></svg>
<div class="t" style="left:82.8px;top:1020.1px;font-size:12px;letter-spacing:-0.053px;color:#b5c9de">Directory Matching</div>
<svg class="abs" style="left:61.7px;top:1048.1px" width="13" height="13" viewBox="0 0 13 13" fill="none" stroke="#9bb3cf" stroke-width="1.100" stroke-linejoin="round" stroke-linecap="round"><path d="M6.500 1.300L12.200 11.700H.8z"/><path d="M6.500 5.200v3.300"/><circle cx="6.500" cy="10" r=".35" fill="#9bb3cf"/></svg>
<div class="t" style="left:82.8px;top:1048.4px;font-size:12px;letter-spacing:-0.159px;color:#b5c9de">Unassigned Services</div>
<svg class="abs" style="left:61.7px;top:1076.8px" width="13" height="13" viewBox="0 0 13 13" fill="none" stroke="#9bb3cf" stroke-width="1.200" stroke-linecap="round" stroke-linejoin="round"><path d="M4.100 .7v4M9.100 .7v4"/><rect x="1.200" y="4.700" width="10.800" height="4" rx="2"/><path d="M6.600 8.700v4"/></svg>
<div class="t" style="left:82.8px;top:1077.1px;font-size:12px;letter-spacing:-0.133px;color:#b5c9de">SMS Identification</div>
<svg class="abs" style="left:61.7px;top:1105.1px" width="13" height="13" viewBox="0 0 13 13" fill="none" stroke="#9bb3cf" stroke-width="1.100" stroke-linejoin="round" stroke-linecap="round"><path d="M6.500 1.300L12.200 11.700H.8z"/><path d="M6.500 5.200v3.300"/><circle cx="6.500" cy="10" r=".35" fill="#9bb3cf"/></svg>
<div class="t" style="left:82.8px;top:1105.4px;font-size:12px;letter-spacing:-0.272px;color:#b5c9de">AI Caller</div>
<svg class="abs" style="left:61.7px;top:1133.8px" width="13" height="13" viewBox="0 0 13 13" fill="#9bb3cf"><rect x=".5" y="7.500" width="2.700" height="5" rx=".4"/><rect x="5.100" y="4.300" width="2.700" height="8.200" rx=".4"/><rect x="9.700" y="1" width="2.700" height="11.500" rx=".4"/></svg>
<div class="t" style="left:82.8px;top:1134.1px;font-size:12px;letter-spacing:-0.186px;color:#b5c9de">Savings Calculator</div>
<svg class="abs" style="left:61.7px;top:1162.1px" width="13" height="13" viewBox="0 0 13 13" fill="none" stroke="#9bb3cf" stroke-width="1.100" stroke-linejoin="round" stroke-linecap="round"><path d="M6.500 1.300L12.200 11.700H.8z"/><path d="M6.500 5.200v3.300"/><circle cx="6.500" cy="10" r=".35" fill="#9bb3cf"/></svg>
<div class="t" style="left:82.8px;top:1162.4px;font-size:12px;letter-spacing:-0.216px;color:#b5c9de">Leaver Devices</div>
<svg class="abs" style="left:47.0px;top:1196.8px" width="6.8" height="4.1" viewBox="0 0 10 6" fill="none" stroke="#7f9cbc" stroke-width="1.500" stroke-linecap="round" stroke-linejoin="round"><path d="M1 1L5 5L9 1"/></svg>
<svg class="abs" style="left:62.9px;top:1192.4px" width="13" height="13" viewBox="0 0 13 13" fill="none" stroke="#c3d3e5" stroke-width="1.100" stroke-linecap="round"><circle cx="6.500" cy="6.800" r="5.300"/><path d="M6.500 .6v5"/></svg>
<div class="t b" style="left:84.1px;top:1192.6px;font-size:12px;letter-spacing:-0.17px;color:#e3edf7">Right to Disconnect</div>
<div class="abs" style="left:23px;top:1214.8px;width:199px;height:1px;background:#0a4a82"></div>
<!--/SIDEC-->
<!--MAINC-->
<div class="abs" style="left:1671.0px;top:217.0px;width:6.0px;height:425.0px;border-radius:3px;background:#b3dff0"></div>
<svg class="abs" style="left:1671px;top:209.500px" width="6" height="4" viewBox="0 0 6 4"><path d="M3 .2L5.900 3.800H.1z" fill="#b3dff0"/></svg>
<svg class="abs" style="left:1671px;top:1187.500px" width="6" height="4" viewBox="0 0 6 4"><path d="M3 3.800L5.900 .2H.1z" fill="#b3dff0"/></svg>
<div class="abs" style="left:255.0px;top:223.0px;width:1392.0px;height:190.0px;border-radius:11px;background:linear-gradient(115deg,#003e76 0%,#00467f 45%,#00508b 100%);box-shadow:0 0 0 1px rgba(255,255,255,.4)"></div>
<div class="t b" style="left:631.2px;top:243.2px;font-size:15px;letter-spacing:0.25px;color:#fff;-webkit-text-stroke:.35px #fff">Session Integrity — Jiggler &amp; Keep-Alive Detection</div>
<div class="t" style="left:631.2px;top:269.2px;font-size:12px;letter-spacing:-0.1px;color:#a9c0d8;">Automated endpoint telemetry detects mouse movement simulators, keyboard keep-alive tools, software-based evasion,</div>
<div class="t" style="left:631.2px;top:285.4px;font-size:12px;letter-spacing:-0.09px;color:#a9c0d8;">and system-level configuration changes that may misrepresent employee presence or activity.</div>
<svg class="abs" style="left:890px;top:318px" width="122" height="70" viewBox="0 0 122 70"><path d="M9.400 61.700A51.700 51.700 0 0 1 112.800 61.700" fill="none" stroke="#cf2020" stroke-width="8.800" stroke-linecap="round"/></svg>
<div class="t b mono" style="left:750.6px;width:400px;text-align:center;top:354.0px;font-size:24px;letter-spacing:-1.1px;color:#cf2020;">100%</div>
<div class="t b" style="left:751.6px;width:400px;text-align:center;top:381.6px;font-size:8px;letter-spacing:0.55px;color:#7fa0c2;">DETECTION RATE</div>
<div class="abs" style="left:255.0px;top:429.0px;width:1392.0px;height:84.5px;border-radius:12px;background:#fff;border:1px solid #d5e3ee;box-shadow:0 1px 3px rgba(20,60,100,.07)"></div>
<svg class="abs" style="left:337.1px;top:446.6px" width="10" height="10" viewBox="0 0 10 10"><g fill="#4b2d83"><circle cx="2.900" cy="3.200" r="2"/><circle cx="7.100" cy="3.200" r="2"/><path d="M0 9c0-2.500 1.200-3.600 2.900-3.600S5 6 5 6.500C5 6 5.400 5.400 7.100 5.400S10 6.500 10 9z"/></g></svg>
<div class="t b mono" style="left:142.2px;width:400px;text-align:center;top:464.2px;font-size:22px;letter-spacing:-1.5px;color:#c8161d;text-indent:-1.500px">20</div>
<div class="t" style="left:142.4px;width:400px;text-align:center;top:488.7px;font-size:9px;letter-spacing:0px;color:#5f7893;">Flagged Users</div>
<div class="abs" style="left:429.0px;top:430.0px;width:1.0px;height:82.5px;background:#d5e3ee"></div>
<svg class="abs" style="left:510.8px;top:446.0px" width="10" height="10" viewBox="0 0 10 10"><path d="M.5 4.500c1-.2 1.500-1.500 2.500-2.500s1.800-.8 2.300.2" fill="none" stroke="#3b4a5c" stroke-width=".7"/><path d="M4 5.200c0-1.700 1-2.400 2.400-2.400s2.400.7 2.400 2.400v3.300H4z" fill="#f4f6f8" stroke="#8a97a6" stroke-width=".6"/><rect x="5.300" y="3" width="1.600" height="2" fill="#2f6fc4"/></svg>
<div class="t b mono" style="left:315.9px;width:400px;text-align:center;top:464.2px;font-size:22px;letter-spacing:-1.5px;color:#c8161d;text-indent:-1.500px">7</div>
<div class="t" style="left:316.1px;width:400px;text-align:center;top:488.7px;font-size:9px;letter-spacing:0px;color:#5f7893;">Mouse Jigglers</div>
<div class="abs" style="left:603.0px;top:430.0px;width:1.0px;height:82.5px;background:#d5e3ee"></div>
<svg class="abs" style="left:684.6px;top:446.6px" width="10" height="10" viewBox="0 0 10 10"><rect x=".3" y="2.800" width="9.400" height="5.200" rx=".6" fill="#b9bdc3"/><path d="M1.300 4.200h7.400M1.300 5.400h7.400" stroke="#8f949b" stroke-width=".6" stroke-dasharray=".8 .5"/><path d="M2.800 6.800h4.400" stroke="#7d828a" stroke-width=".7"/></svg>
<div class="t b mono" style="left:489.7px;width:400px;text-align:center;top:464.2px;font-size:22px;letter-spacing:-1.5px;color:#c8161d;text-indent:-1.500px">7</div>
<div class="t" style="left:489.9px;width:400px;text-align:center;top:488.7px;font-size:9px;letter-spacing:0px;color:#5f7893;">Keyboard</div>
<div class="abs" style="left:776.0px;top:430.0px;width:1.0px;height:82.5px;background:#d5e3ee"></div>
<svg class="abs" style="left:858.3px;top:446.6px" width="10" height="10" viewBox="0 0 10 10"><rect x="1" y=".6" width="8" height="6.400" rx=".5" fill="#5b6670"/><rect x="1.600" y="1.200" width="6.800" height="5.200" fill="#3bc4f0"/><path d="M0 8.100h10l-.6 1.200H.6z" fill="#8a949e"/><rect x="3" y="7.200" width="4" height=".9" fill="#6d7781"/></svg>
<div class="t b mono" style="left:663.4px;width:400px;text-align:center;top:464.2px;font-size:22px;letter-spacing:-1.5px;color:#e67e22;text-indent:-1.500px">4</div>
<div class="t" style="left:663.6px;width:400px;text-align:center;top:488.7px;font-size:9px;letter-spacing:0px;color:#5f7893;">Software</div>
<div class="abs" style="left:950.0px;top:430.0px;width:1.0px;height:82.5px;background:#d5e3ee"></div>
<svg class="abs" style="left:1032.1px;top:446.6px" width="10" height="10" viewBox="0 0 10 10"><path d="M5 .4L9 1.600v3.200c0 2.500-1.900 4.200-4 4.800-2.100-.6-4-2.300-4-4.800V1.600z" fill="#2f7fe0"/><path d="M5 .4L1 1.600v3.200c0 2.500 1.900 4.200 4 4.800z" fill="#7db8f5"/></svg>
<div class="t b mono" style="left:837.2px;width:400px;text-align:center;top:464.2px;font-size:22px;letter-spacing:-1.5px;color:#0f8a7a;text-indent:-1.500px">4</div>
<div class="t" style="left:837.4px;width:400px;text-align:center;top:488.7px;font-size:9px;letter-spacing:0px;color:#5f7893;">System-Level</div>
<div class="abs" style="left:1124.0px;top:430.0px;width:1.0px;height:82.5px;background:#d5e3ee"></div>
<svg class="abs" style="left:1205.8px;top:446.6px" width="10" height="10" viewBox="0 0 10 10"><rect x=".3" y=".3" width="9.400" height="9.400" rx=".8" fill="#c9ced6"/><rect x="1.500" y="4.500" width="1.800" height="4.600" fill="#3fae5a"/><rect x="4.100" y="2.200" width="1.800" height="6.900" fill="#d33b4b"/><rect x="6.700" y="3.500" width="1.800" height="5.600" fill="#3b7fe0"/></svg>
<div class="t b mono" style="left:1010.9px;width:400px;text-align:center;top:464.2px;font-size:22px;letter-spacing:-1.5px;color:#c8161d;text-indent:-1.500px">506</div>
<div class="t" style="left:1011.1px;width:400px;text-align:center;top:488.7px;font-size:9px;letter-spacing:0px;color:#5f7893;">Total Events</div>
<div class="abs" style="left:1298.0px;top:430.0px;width:1.0px;height:82.5px;background:#d5e3ee"></div>
<svg class="abs" style="left:1379.6px;top:446.6px" width="10" height="10" viewBox="0 0 10 10"><circle cx="5" cy="5" r="4.800" fill="#e0394a"/><circle cx="3.600" cy="3.400" r="1.600" fill="#ee6b77" opacity=".6"/></svg>
<div class="t b mono" style="left:1184.7px;width:400px;text-align:center;top:464.2px;font-size:22px;letter-spacing:-1.5px;color:#c8161d;text-indent:-1.500px">7</div>
<div class="t" style="left:1184.9px;width:400px;text-align:center;top:488.7px;font-size:9px;letter-spacing:0px;color:#5f7893;">High Risk</div>
<div class="abs" style="left:1471.0px;top:430.0px;width:1.0px;height:82.5px;background:#d5e3ee"></div>
<svg class="abs" style="left:1553.3px;top:446.6px" width="10" height="10" viewBox="0 0 10 10"><circle cx="5" cy="5" r="4.800" fill="#f0b430"/><circle cx="3.600" cy="3.400" r="1.600" fill="#f9d678" opacity=".7"/></svg>
<div class="t b mono" style="left:1358.4px;width:400px;text-align:center;top:464.2px;font-size:22px;letter-spacing:-1.5px;color:#f59e0b;text-indent:-1.500px">9</div>
<div class="t" style="left:1358.6px;width:400px;text-align:center;top:488.7px;font-size:9px;letter-spacing:0px;color:#5f7893;">Medium Risk</div>
<div class="abs" style="left:255.0px;top:530.0px;width:928.0px;height:262.0px;border-radius:12px;background:#fff;border:1px solid #d5e3ee;box-shadow:0 1px 3px rgba(20,60,100,.07)"></div>
<div class="t b" style="left:272.1px;top:549.1px;font-size:14.5px;letter-spacing:-0.52px;color:#0f2a47;">Detection Heatmap — February 2026</div>
<div class="t mono" style="left:151.4px;width:400px;text-align:center;top:581.9px;font-size:8px;letter-spacing:-0.3px;color:#7d99b7;">8a</div>
<div class="t mono" style="left:237.1px;width:400px;text-align:center;top:581.9px;font-size:8px;letter-spacing:-0.3px;color:#7d99b7;">9a</div>
<div class="t mono" style="left:322.9px;width:400px;text-align:center;top:581.9px;font-size:8px;letter-spacing:-0.3px;color:#7d99b7;">10a</div>
<div class="t mono" style="left:408.7px;width:400px;text-align:center;top:581.9px;font-size:8px;letter-spacing:-0.3px;color:#7d99b7;">11a</div>
<div class="t mono" style="left:494.5px;width:400px;text-align:center;top:581.9px;font-size:8px;letter-spacing:-0.3px;color:#7d99b7;">12a</div>
<div class="t mono" style="left:580.3px;width:400px;text-align:center;top:581.9px;font-size:8px;letter-spacing:-0.3px;color:#7d99b7;">1p</div>
<div class="t mono" style="left:666.1px;width:400px;text-align:center;top:581.9px;font-size:8px;letter-spacing:-0.3px;color:#7d99b7;">2p</div>
<div class="t mono" style="left:751.9px;width:400px;text-align:center;top:581.9px;font-size:8px;letter-spacing:-0.3px;color:#7d99b7;">3p</div>
<div class="t mono" style="left:837.7px;width:400px;text-align:center;top:581.9px;font-size:8px;letter-spacing:-0.3px;color:#7d99b7;">4p</div>
<div class="t mono" style="left:923.5px;width:400px;text-align:center;top:581.9px;font-size:8px;letter-spacing:-0.3px;color:#7d99b7;">5p</div>
<div class="t b" style="left:272.1px;top:600.2px;font-size:9.5px;letter-spacing:-0.1px;color:#2a4a6b;">Mon</div>
<div class="abs" style="left:309.1px;top:594.0px;width:84.8px;height:22.0px;border-radius:4px;background:#f6fbfe"></div>
<div class="abs" style="left:394.8px;top:594.0px;width:84.8px;height:22.0px;border-radius:4px;background:#f6fbfe"></div>
<div class="abs" style="left:480.6px;top:594.0px;width:84.8px;height:22.0px;border-radius:4px;background:#f6fbfe"></div>
<div class="abs" style="left:566.4px;top:594.0px;width:84.8px;height:22.0px;border-radius:4px;background:#f6fbfe"></div>
<div class="abs" style="left:652.2px;top:594.0px;width:84.8px;height:22.0px;border-radius:4px;background:#f6fbfe"></div>
<div class="abs" style="left:738.0px;top:594.0px;width:84.8px;height:22.0px;border-radius:4px;background:#f6fbfe"></div>
<div class="abs" style="left:823.8px;top:594.0px;width:84.8px;height:22.0px;border-radius:4px;background:#f6fbfe"></div>
<div class="abs" style="left:909.6px;top:594.0px;width:84.8px;height:22.0px;border-radius:4px;background:#f6fbfe"></div>
<div class="abs" style="left:995.4px;top:594.0px;width:84.8px;height:22.0px;border-radius:4px;background:#f6fbfe"></div>
<div class="abs" style="left:1081.2px;top:594.0px;width:84.8px;height:22.0px;border-radius:4px;background:#f6fbfe"></div>
<div class="t b" style="left:272.1px;top:623.2px;font-size:9.5px;letter-spacing:-0.1px;color:#2a4a6b;">Tue</div>
<div class="abs" style="left:309.1px;top:617.0px;width:84.8px;height:22.0px;border-radius:4px;background:#e4b2b9;border:1px solid #da959e"></div>
<div class="t b mono" style="left:151.4px;width:400px;text-align:center;top:624.3px;font-size:9.5px;letter-spacing:-0.9px;color:#fff;text-indent:-.9px;-webkit-text-stroke:.3px #fff">8</div>
<div class="abs" style="left:394.8px;top:617.0px;width:84.8px;height:22.0px;border-radius:4px;background:#c7606e;border:1px solid #bd4354"></div>
<div class="t b mono" style="left:237.2px;width:400px;text-align:center;top:624.3px;font-size:9.5px;letter-spacing:-0.9px;color:#fff;text-indent:-.9px;-webkit-text-stroke:.3px #fff">23</div>
<div class="abs" style="left:480.6px;top:617.0px;width:84.8px;height:22.0px;border-radius:4px;background:#cf7682;border:1px solid #c55968"></div>
<div class="t b mono" style="left:323.0px;width:400px;text-align:center;top:624.3px;font-size:9.5px;letter-spacing:-0.9px;color:#fff;text-indent:-.9px;-webkit-text-stroke:.3px #fff">19</div>
<div class="abs" style="left:566.4px;top:617.0px;width:84.8px;height:22.0px;border-radius:4px;background:#dea2aa;border:1px solid #d4848f"></div>
<div class="t b mono" style="left:408.8px;width:400px;text-align:center;top:624.3px;font-size:9.5px;letter-spacing:-0.9px;color:#fff;text-indent:-.9px;-webkit-text-stroke:.3px #fff">11</div>
<div class="abs" style="left:652.2px;top:617.0px;width:84.8px;height:22.0px;border-radius:4px;background:#efd2d6;border:1px solid #e5b5bc"></div>
<div class="t b mono" style="left:494.6px;width:400px;text-align:center;top:624.3px;font-size:9.5px;letter-spacing:-0.9px;color:#fff;text-indent:-.9px;-webkit-text-stroke:.3px #fff">2</div>
<div class="abs" style="left:738.0px;top:617.0px;width:84.8px;height:22.0px;border-radius:4px;background:#cb6b78;border:1px solid #c14e5e"></div>
<div class="t b mono" style="left:580.4px;width:400px;text-align:center;top:624.3px;font-size:9.5px;letter-spacing:-0.9px;color:#fff;text-indent:-.9px;-webkit-text-stroke:.3px #fff">21</div>
<div class="abs" style="left:823.8px;top:617.0px;width:84.8px;height:22.0px;border-radius:4px;background:#d17b87;border:1px solid #c75e6d"></div>
<div class="t b mono" style="left:666.2px;width:400px;text-align:center;top:624.3px;font-size:9.5px;letter-spacing:-0.9px;color:#fff;text-indent:-.9px;-webkit-text-stroke:.3px #fff">18</div>
<div class="abs" style="left:909.6px;top:617.0px;width:84.8px;height:22.0px;border-radius:4px;background:#e0a7af;border:1px solid #d68a94"></div>
<div class="t b mono" style="left:752.0px;width:400px;text-align:center;top:624.3px;font-size:9.5px;letter-spacing:-0.9px;color:#fff;text-indent:-.9px;-webkit-text-stroke:.3px #fff">10</div>
<div class="abs" style="left:995.4px;top:617.0px;width:84.8px;height:22.0px;border-radius:4px;background:#efd2d6;border:1px solid #e5b5bc"></div>
<div class="t b mono" style="left:837.8px;width:400px;text-align:center;top:624.3px;font-size:9.5px;letter-spacing:-0.9px;color:#fff;text-indent:-.9px;-webkit-text-stroke:.3px #fff">2</div>
<div class="abs" style="left:1081.2px;top:617.0px;width:84.8px;height:22.0px;border-radius:4px;background:#f6fbfe"></div>
<div class="t b" style="left:272.1px;top:646.2px;font-size:9.5px;letter-spacing:-0.1px;color:#2a4a6b;">Wed</div>
<div class="abs" style="left:309.1px;top:640.0px;width:84.8px;height:22.0px;border-radius:4px;background:#e4b2b9;border:1px solid #da959e"></div>
<div class="t b mono" style="left:151.4px;width:400px;text-align:center;top:647.3px;font-size:9.5px;letter-spacing:-0.9px;color:#fff;text-indent:-.9px;-webkit-text-stroke:.3px #fff">8</div>
<div class="abs" style="left:394.8px;top:640.0px;width:84.8px;height:22.0px;border-radius:4px;background:#d17b87;border:1px solid #c75e6d"></div>
<div class="t b mono" style="left:237.2px;width:400px;text-align:center;top:647.3px;font-size:9.5px;letter-spacing:-0.9px;color:#fff;text-indent:-.9px;-webkit-text-stroke:.3px #fff">18</div>
<div class="abs" style="left:480.6px;top:640.0px;width:84.8px;height:22.0px;border-radius:4px;background:#d3818c;border:1px solid #c86471"></div>
<div class="t b mono" style="left:323.0px;width:400px;text-align:center;top:647.3px;font-size:9.5px;letter-spacing:-0.9px;color:#fff;text-indent:-.9px;-webkit-text-stroke:.3px #fff">17</div>
<div class="abs" style="left:566.4px;top:640.0px;width:84.8px;height:22.0px;border-radius:4px;background:#e2acb4;border:1px solid #d88f99"></div>
<div class="t b mono" style="left:408.8px;width:400px;text-align:center;top:647.3px;font-size:9.5px;letter-spacing:-0.9px;color:#fff;text-indent:-.9px;-webkit-text-stroke:.3px #fff">9</div>
<div class="abs" style="left:652.2px;top:640.0px;width:84.8px;height:22.0px;border-radius:4px;background:#efd2d6;border:1px solid #e5b5bc"></div>
<div class="t b mono" style="left:494.6px;width:400px;text-align:center;top:647.3px;font-size:9.5px;letter-spacing:-0.9px;color:#fff;text-indent:-.9px;-webkit-text-stroke:.3px #fff">2</div>
<div class="abs" style="left:738.0px;top:640.0px;width:84.8px;height:22.0px;border-radius:4px;background:#cf7682;border:1px solid #c55968"></div>
<div class="t b mono" style="left:580.4px;width:400px;text-align:center;top:647.3px;font-size:9.5px;letter-spacing:-0.9px;color:#fff;text-indent:-.9px;-webkit-text-stroke:.3px #fff">19</div>
<div class="abs" style="left:823.8px;top:640.0px;width:84.8px;height:22.0px;border-radius:4px;background:#d3818c;border:1px solid #c86471"></div>
<div class="t b mono" style="left:666.2px;width:400px;text-align:center;top:647.3px;font-size:9.5px;letter-spacing:-0.9px;color:#fff;text-indent:-.9px;-webkit-text-stroke:.3px #fff">17</div>
<div class="abs" style="left:909.6px;top:640.0px;width:84.8px;height:22.0px;border-radius:4px;background:#e2acb4;border:1px solid #d88f99"></div>
<div class="t b mono" style="left:752.0px;width:400px;text-align:center;top:647.3px;font-size:9.5px;letter-spacing:-0.9px;color:#fff;text-indent:-.9px;-webkit-text-stroke:.3px #fff">9</div>
<div class="abs" style="left:995.4px;top:640.0px;width:84.8px;height:22.0px;border-radius:4px;background:#efd2d6;border:1px solid #e5b5bc"></div>
<div class="t b mono" style="left:837.8px;width:400px;text-align:center;top:647.3px;font-size:9.5px;letter-spacing:-0.9px;color:#fff;text-indent:-.9px;-webkit-text-stroke:.3px #fff">2</div>
<div class="abs" style="left:1081.2px;top:640.0px;width:84.8px;height:22.0px;border-radius:4px;background:#f6fbfe"></div>
<div class="t b" style="left:272.1px;top:669.2px;font-size:9.5px;letter-spacing:-0.1px;color:#2a4a6b;">Thu</div>
<div class="abs" style="left:309.1px;top:663.0px;width:84.8px;height:22.0px;border-radius:4px;background:#da97a0;border:1px solid #d07985"></div>
<div class="t b mono" style="left:151.4px;width:400px;text-align:center;top:670.3px;font-size:9.5px;letter-spacing:-0.9px;color:#fff;text-indent:-.9px;-webkit-text-stroke:.3px #fff">13</div>
<div class="abs" style="left:394.8px;top:663.0px;width:84.8px;height:22.0px;border-radius:4px;background:#bc4051;border:1px solid #b22236"></div>
<div class="t b mono" style="left:237.2px;width:400px;text-align:center;top:670.3px;font-size:9.5px;letter-spacing:-0.9px;color:#fff;text-indent:-.9px;-webkit-text-stroke:.3px #fff">29</div>
<div class="abs" style="left:480.6px;top:663.0px;width:84.8px;height:22.0px;border-radius:4px;background:#c35565;border:1px solid #b9384a"></div>
<div class="t b mono" style="left:323.0px;width:400px;text-align:center;top:670.3px;font-size:9.5px;letter-spacing:-0.9px;color:#fff;text-indent:-.9px;-webkit-text-stroke:.3px #fff">25</div>
<div class="abs" style="left:566.4px;top:663.0px;width:84.8px;height:22.0px;border-radius:4px;background:#da97a0;border:1px solid #d07985"></div>
<div class="t b mono" style="left:408.8px;width:400px;text-align:center;top:670.3px;font-size:9.5px;letter-spacing:-0.9px;color:#fff;text-indent:-.9px;-webkit-text-stroke:.3px #fff">13</div>
<div class="abs" style="left:652.2px;top:663.0px;width:84.8px;height:22.0px;border-radius:4px;background:#edcdd1;border:1px solid #e3b0b7"></div>
<div class="t b mono" style="left:494.6px;width:400px;text-align:center;top:670.3px;font-size:9.5px;letter-spacing:-0.9px;color:#fff;text-indent:-.9px;-webkit-text-stroke:.3px #fff">3</div>
<div class="abs" style="left:738.0px;top:663.0px;width:84.8px;height:22.0px;border-radius:4px;background:#c35565;border:1px solid #b9384a"></div>
<div class="t b mono" style="left:580.4px;width:400px;text-align:center;top:670.3px;font-size:9.5px;letter-spacing:-0.9px;color:#fff;text-indent:-.9px;-webkit-text-stroke:.3px #fff">25</div>
<div class="abs" style="left:823.8px;top:663.0px;width:84.8px;height:22.0px;border-radius:4px;background:#c96673;border:1px solid #bf4959"></div>
<div class="t b mono" style="left:666.2px;width:400px;text-align:center;top:670.3px;font-size:9.5px;letter-spacing:-0.9px;color:#fff;text-indent:-.9px;-webkit-text-stroke:.3px #fff">22</div>
<div class="abs" style="left:909.6px;top:663.0px;width:84.8px;height:22.0px;border-radius:4px;background:#da97a0;border:1px solid #d07985"></div>
<div class="t b mono" style="left:752.0px;width:400px;text-align:center;top:670.3px;font-size:9.5px;letter-spacing:-0.9px;color:#fff;text-indent:-.9px;-webkit-text-stroke:.3px #fff">13</div>
<div class="abs" style="left:995.4px;top:663.0px;width:84.8px;height:22.0px;border-radius:4px;background:#edcdd1;border:1px solid #e3b0b7"></div>
<div class="t b mono" style="left:837.8px;width:400px;text-align:center;top:670.3px;font-size:9.5px;letter-spacing:-0.9px;color:#fff;text-indent:-.9px;-webkit-text-stroke:.3px #fff">3</div>
<div class="abs" style="left:1081.2px;top:663.0px;width:84.8px;height:22.0px;border-radius:4px;background:#f6fbfe"></div>
<div class="t b" style="left:272.1px;top:692.2px;font-size:9.5px;letter-spacing:-0.1px;color:#2a4a6b;">Fri</div>
<div class="abs" style="left:309.1px;top:686.0px;width:84.8px;height:22.0px;border-radius:4px;background:#da97a0;border:1px solid #d07985"></div>
<div class="t b mono" style="left:151.4px;width:400px;text-align:center;top:693.3px;font-size:9.5px;letter-spacing:-0.9px;color:#fff;text-indent:-.9px;-webkit-text-stroke:.3px #fff">13</div>
<div class="abs" style="left:394.8px;top:686.0px;width:84.8px;height:22.0px;border-radius:4px;background:#c35565;border:1px solid #b9384a"></div>
<div class="t b mono" style="left:237.2px;width:400px;text-align:center;top:693.3px;font-size:9.5px;letter-spacing:-0.9px;color:#fff;text-indent:-.9px;-webkit-text-stroke:.3px #fff">25</div>
<div class="abs" style="left:480.6px;top:686.0px;width:84.8px;height:22.0px;border-radius:4px;background:#c7606e;border:1px solid #bd4354"></div>
<div class="t b mono" style="left:323.0px;width:400px;text-align:center;top:693.3px;font-size:9.5px;letter-spacing:-0.9px;color:#fff;text-indent:-.9px;-webkit-text-stroke:.3px #fff">23</div>
<div class="abs" style="left:566.4px;top:686.0px;width:84.8px;height:22.0px;border-radius:4px;background:#d78c96;border:1px solid #cc6f7b"></div>
<div class="t b mono" style="left:408.8px;width:400px;text-align:center;top:693.3px;font-size:9.5px;letter-spacing:-0.9px;color:#fff;text-indent:-.9px;-webkit-text-stroke:.3px #fff">15</div>
<div class="abs" style="left:652.2px;top:686.0px;width:84.8px;height:22.0px;border-radius:4px;background:#edcdd1;border:1px solid #e3b0b7"></div>
<div class="t b mono" style="left:494.6px;width:400px;text-align:center;top:693.3px;font-size:9.5px;letter-spacing:-0.9px;color:#fff;text-indent:-.9px;-webkit-text-stroke:.3px #fff">3</div>
<div class="abs" style="left:738.0px;top:686.0px;width:84.8px;height:22.0px;border-radius:4px;background:#c7606e;border:1px solid #bd4354"></div>
<div class="t b mono" style="left:580.4px;width:400px;text-align:center;top:693.3px;font-size:9.5px;letter-spacing:-0.9px;color:#fff;text-indent:-.9px;-webkit-text-stroke:.3px #fff">23</div>
<div class="abs" style="left:823.8px;top:686.0px;width:84.8px;height:22.0px;border-radius:4px;background:#c96673;border:1px solid #bf4959"></div>
<div class="t b mono" style="left:666.2px;width:400px;text-align:center;top:693.3px;font-size:9.5px;letter-spacing:-0.9px;color:#fff;text-indent:-.9px;-webkit-text-stroke:.3px #fff">22</div>
<div class="abs" style="left:909.6px;top:686.0px;width:84.8px;height:22.0px;border-radius:4px;background:#d3818c;border:1px solid #c86471"></div>
<div class="t b mono" style="left:752.0px;width:400px;text-align:center;top:693.3px;font-size:9.5px;letter-spacing:-0.9px;color:#fff;text-indent:-.9px;-webkit-text-stroke:.3px #fff">17</div>
<div class="abs" style="left:995.4px;top:686.0px;width:84.8px;height:22.0px;border-radius:4px;background:#ecc8cc;border:1px solid #e1aab2"></div>
<div class="t b mono" style="left:837.8px;width:400px;text-align:center;top:693.3px;font-size:9.5px;letter-spacing:-0.9px;color:#fff;text-indent:-.9px;-webkit-text-stroke:.3px #fff">4</div>
<div class="abs" style="left:1081.2px;top:686.0px;width:84.8px;height:22.0px;border-radius:4px;background:#f6fbfe"></div>
<div class="t b" style="left:272.1px;top:715.2px;font-size:9.5px;letter-spacing:-0.1px;color:#2a4a6b;">Sat</div>
<div class="abs" style="left:309.1px;top:709.0px;width:84.8px;height:22.0px;border-radius:4px;background:#f6fbfe"></div>
<div class="abs" style="left:394.8px;top:709.0px;width:84.8px;height:22.0px;border-radius:4px;background:#f6fbfe"></div>
<div class="abs" style="left:480.6px;top:709.0px;width:84.8px;height:22.0px;border-radius:4px;background:#f6fbfe"></div>
<div class="abs" style="left:566.4px;top:709.0px;width:84.8px;height:22.0px;border-radius:4px;background:#f6fbfe"></div>
<div class="abs" style="left:652.2px;top:709.0px;width:84.8px;height:22.0px;border-radius:4px;background:#f6fbfe"></div>
<div class="abs" style="left:738.0px;top:709.0px;width:84.8px;height:22.0px;border-radius:4px;background:#f6fbfe"></div>
<div class="abs" style="left:823.8px;top:709.0px;width:84.8px;height:22.0px;border-radius:4px;background:#f6fbfe"></div>
<div class="abs" style="left:909.6px;top:709.0px;width:84.8px;height:22.0px;border-radius:4px;background:#f6fbfe"></div>
<div class="abs" style="left:995.4px;top:709.0px;width:84.8px;height:22.0px;border-radius:4px;background:#f6fbfe"></div>
<div class="abs" style="left:1081.2px;top:709.0px;width:84.8px;height:22.0px;border-radius:4px;background:#f6fbfe"></div>
<div class="t b" style="left:272.1px;top:738.2px;font-size:9.5px;letter-spacing:-0.1px;color:#2a4a6b;">Sun</div>
<div class="abs" style="left:309.1px;top:732.0px;width:84.8px;height:22.0px;border-radius:4px;background:#f6fbfe"></div>
<div class="abs" style="left:394.8px;top:732.0px;width:84.8px;height:22.0px;border-radius:4px;background:#f6fbfe"></div>
<div class="abs" style="left:480.6px;top:732.0px;width:84.8px;height:22.0px;border-radius:4px;background:#f6fbfe"></div>
<div class="abs" style="left:566.4px;top:732.0px;width:84.8px;height:22.0px;border-radius:4px;background:#f6fbfe"></div>
<div class="abs" style="left:652.2px;top:732.0px;width:84.8px;height:22.0px;border-radius:4px;background:#f6fbfe"></div>
<div class="abs" style="left:738.0px;top:732.0px;width:84.8px;height:22.0px;border-radius:4px;background:#f6fbfe"></div>
<div class="abs" style="left:823.8px;top:732.0px;width:84.8px;height:22.0px;border-radius:4px;background:#f6fbfe"></div>
<div class="abs" style="left:909.6px;top:732.0px;width:84.8px;height:22.0px;border-radius:4px;background:#f6fbfe"></div>
<div class="abs" style="left:995.4px;top:732.0px;width:84.8px;height:22.0px;border-radius:4px;background:#f6fbfe"></div>
<div class="abs" style="left:1081.2px;top:732.0px;width:84.8px;height:22.0px;border-radius:4px;background:#f6fbfe"></div>
<div class="abs" style="left:272.3px;top:764.3px;width:9.5px;height:9.5px;border-radius:2px;background:#29b3df"></div>
<div class="t" style="left:285.2px;top:764.2px;font-size:9.5px;letter-spacing:0.09px;color:#7d99b7;">Mouse Jiggler</div>
<div class="abs" style="left:362.2px;top:764.3px;width:9.5px;height:9.5px;border-radius:2px;background:#9b7fd1"></div>
<div class="t" style="left:374.5px;top:764.2px;font-size:9.5px;letter-spacing:0px;color:#7d99b7;">Keyboard Keep-Alive</div>
<div class="abs" style="left:480.0px;top:764.3px;width:9.5px;height:9.5px;border-radius:2px;background:#ec9a4e"></div>
<div class="t" style="left:493.4px;top:764.2px;font-size:9.5px;letter-spacing:-0.05px;color:#7d99b7;">Software Evasion</div>
<div class="abs" style="left:583.2px;top:764.3px;width:9.5px;height:9.5px;border-radius:2px;background:#3aa99d"></div>
<div class="t" style="left:596.0px;top:764.2px;font-size:9.5px;letter-spacing:0px;color:#7d99b7;">System-Level</div>
<div class="abs" style="left:1183.0px;top:530.0px;width:464.0px;height:262.0px;border-radius:12px;background:#fff;border:1px solid #d5e3ee;box-shadow:0 1px 3px rgba(20,60,100,.07)"></div>
<div class="t b" style="left:1200.4px;top:549.1px;font-size:14.5px;letter-spacing:-0.53px;color:#0f2a47;">Weekly Trend</div>
<div class="t b" style="left:1200.4px;top:581.9px;font-size:9.5px;letter-spacing:0.04px;color:#2a4a6b;">W1 Feb</div>
<div class="t b mono" style="right:53.7px;top:582.2px;font-size:10.5px;letter-spacing:0.15px;color:#7d99b7;">14&nbsp;—</div>
<div class="abs" style="left:1200.4px;top:597.1px;width:429.5px;height:7.8px;border-radius:4px;background:#f3f9fd"></div>
<div class="abs" style="left:1200.4px;top:597.1px;width:5.9px;height:7.8px;border-radius:4px 0 0 4px;background:#0ea5d9"></div>
<div class="abs" style="left:1207.0px;top:597.1px;width:15.8px;height:7.8px;border-radius:0 0 0 0;background:#7c5cbf"></div>
<div class="abs" style="left:1222.8px;top:597.1px;width:0.0px;height:7.8px;border-radius:0 4px 4px 0;background:#0f9688"></div>
<div class="t b" style="left:1200.4px;top:616.0px;font-size:9.5px;letter-spacing:0.04px;color:#2a4a6b;">W2 Feb</div>
<div class="t b mono" style="right:53.7px;top:616.2px;font-size:10.5px;letter-spacing:0.15px;color:#d4202a;">64&nbsp;▲50</div>
<div class="abs" style="left:1200.4px;top:631.1px;width:429.5px;height:7.8px;border-radius:4px;background:#f3f9fd"></div>
<div class="abs" style="left:1200.4px;top:631.1px;width:12.5px;height:7.8px;border-radius:4px 0 0 4px;background:#0ea5d9"></div>
<div class="abs" style="left:1214.1px;top:631.1px;width:84.7px;height:7.8px;border-radius:0 0 0 0;background:#7c5cbf"></div>
<div class="abs" style="left:1300.9px;top:631.1px;width:3.3px;height:7.8px;border-radius:0 4px 4px 0;background:#0f9688"></div>
<div class="t b" style="left:1200.4px;top:650.0px;font-size:9.5px;letter-spacing:0.04px;color:#2a4a6b;">W3 Feb</div>
<div class="t b mono" style="right:53.7px;top:650.3px;font-size:10.5px;letter-spacing:0.15px;color:#d4202a;">155&nbsp;▲91</div>
<div class="abs" style="left:1200.4px;top:665.2px;width:429.5px;height:7.8px;border-radius:4px;background:#f3f9fd"></div>
<div class="abs" style="left:1200.4px;top:665.2px;width:24.5px;height:7.8px;border-radius:4px 0 0 4px;background:#0ea5d9"></div>
<div class="abs" style="left:1226.1px;top:665.2px;width:191.9px;height:7.8px;border-radius:0 0 0 0;background:#7c5cbf"></div>
<div class="abs" style="left:1418.9px;top:665.2px;width:15.8px;height:7.8px;border-radius:0 0 0 0;background:#e67e22"></div>
<div class="abs" style="left:1436.2px;top:665.2px;width:10.8px;height:7.8px;border-radius:0 4px 4px 0;background:#0f9688"></div>
<div class="t b" style="left:1200.4px;top:684.1px;font-size:9.5px;letter-spacing:0.04px;color:#2a4a6b;">W4 Feb</div>
<div class="t b mono" style="right:53.7px;top:684.3px;font-size:10.5px;letter-spacing:0.15px;color:#d4202a;">273&nbsp;▲118</div>
<div class="abs" style="left:1200.4px;top:699.2px;width:429.5px;height:7.8px;border-radius:4px;background:#f3f9fd"></div>
<div class="abs" style="left:1200.4px;top:699.2px;width:51.4px;height:7.8px;border-radius:4px 0 0 4px;background:#0ea5d9"></div>
<div class="abs" style="left:1253.0px;top:699.2px;width:321.5px;height:7.8px;border-radius:0 0 0 0;background:#7c5cbf"></div>
<div class="abs" style="left:1576.0px;top:699.2px;width:33.8px;height:7.8px;border-radius:0 0 0 0;background:#e67e22"></div>
<div class="abs" style="left:1611.0px;top:699.2px;width:18.9px;height:7.8px;border-radius:0 4px 4px 0;background:#0f9688"></div>
<div class="abs" style="left:1200.4px;top:720.2px;width:7.6px;height:7.6px;border-radius:1.500px;background:#0ea5d9"></div>
<div class="t" style="left:1211.1px;top:719.2px;font-size:9.5px;letter-spacing:0.09px;color:#7d99b7;">Mouse Jiggler</div>
<div class="abs" style="left:1288.0px;top:720.2px;width:7.6px;height:7.6px;border-radius:1.500px;background:#7c5cbf"></div>
<div class="t" style="left:1298.8px;top:719.2px;font-size:9.5px;letter-spacing:0px;color:#7d99b7;">Keyboard Keep-Alive</div>
<div class="abs" style="left:1404.2px;top:720.2px;width:7.6px;height:7.6px;border-radius:1.500px;background:#e67e22"></div>
<div class="t" style="left:1415.3px;top:719.2px;font-size:9.5px;letter-spacing:-0.05px;color:#7d99b7;">Software Evasion</div>
<div class="abs" style="left:1505.0px;top:720.2px;width:7.6px;height:7.6px;border-radius:1.500px;background:#0f9688"></div>
<div class="t" style="left:1516.1px;top:719.2px;font-size:9.5px;letter-spacing:0px;color:#7d99b7;">System-Level</div>
<div class="abs" style="left:255.0px;top:808.0px;width:1392.0px;height:420.0px;border-radius:12px;background:#fff;border:1px solid #d5e3ee;box-shadow:0 1px 3px rgba(20,60,100,.07)"></div>
<div class="t b" style="left:272.3px;top:828.1px;font-size:14.5px;letter-spacing:-0.69px;color:#0f2a47;">Detection Log</div>
<div class="abs" style="left:1456.2px;top:825.3px;width:48.5px;height:21.2px;border-radius:11px;background:#fdeaea;border:1px solid #f5b9bb"></div>
<div class="t b" style="left:1465.3px;top:831.2px;font-size:9.5px;letter-spacing:-0.24px;color:#d4202a;">High: 7</div>
<div class="abs" style="left:1512.0px;top:825.3px;width:63.5px;height:21.2px;border-radius:11px;background:#fff5e3;border:1px solid #fbdca6"></div>
<div class="t b" style="left:1521.0px;top:831.2px;font-size:9.5px;letter-spacing:-0.11px;color:#f59e0b;">Medium: 9</div>
<div class="abs" style="left:1583.0px;top:825.3px;width:46.5px;height:21.2px;border-radius:11px;background:#e3f9f0;border:1px solid #a5e8cc"></div>
<div class="t b" style="left:1591.8px;top:831.2px;font-size:9.5px;letter-spacing:-0.18px;color:#10b981;">Low: 6</div>
<div class="abs" style="left:272.3px;top:859.2px;width:34.3px;height:24.5px;border-radius:5px;background:#e3f4fb;border:1px solid #1a9fd4"></div>
<div class="t b" style="left:283.0px;top:866.7px;font-size:10.5px;letter-spacing:-0.3px;color:#1a88c0;">All</div>
<div class="abs" style="left:312.4px;top:859.2px;width:66.3px;height:24.5px;border-radius:5px;background:#fff;border:1px solid #d2dfec"></div>
<svg class="abs" style="left:322.5px;top:866.3px" width="10" height="10" viewBox="0 0 10 10"><path d="M.3 3.600c1.200.5 2.200.1 2.800-1.300S4.800.2 6.400.5" fill="none" stroke="#33475b" stroke-width=".9" stroke-linecap="round"/><path d="M4.400 4c0-2.300 1.100-3.400 2.700-3.400S9.800 1.700 9.800 4v3.300a.8.800 0 0 1-.8.800H5.200a.8.800 0 0 1-.8-.8z" fill="#33475b"/><rect x="5.300" y="4.900" width="3.600" height="1.500" fill="#eef6fb"/></svg>
<div class="t b" style="left:336.0px;top:866.7px;font-size:10.5px;letter-spacing:-0.15px;color:#2a4a6b;">Mouse</div>
<div class="abs" style="left:383.8px;top:859.2px;width:84.9px;height:24.5px;border-radius:5px;background:#fff;border:1px solid #d2dfec"></div>
<svg class="abs" style="left:397.0px;top:866.3px" width="10" height="10" viewBox="0 0 10 10"><rect x=".3" y="2.800" width="9.400" height="5.200" rx=".6" fill="#b9bdc3"/><path d="M1.300 4.200h7.400M1.300 5.400h7.400" stroke="#8f949b" stroke-width=".6" stroke-dasharray=".8 .5"/><path d="M2.800 6.800h4.400" stroke="#7d828a" stroke-width=".7"/></svg>
<div class="t b" style="left:411.7px;top:866.7px;font-size:10.5px;letter-spacing:-0.27px;color:#2a4a6b;">Keyboard</div>
<div class="abs" style="left:473.8px;top:859.2px;width:81.8px;height:24.5px;border-radius:5px;background:#fff;border:1px solid #d2dfec"></div>
<svg class="abs" style="left:487.0px;top:866.3px" width="10" height="10" viewBox="0 0 10 10"><rect x="1" y=".6" width="8" height="6.400" rx=".5" fill="#5b6670"/><rect x="1.600" y="1.200" width="6.800" height="5.200" fill="#3bc4f0"/><path d="M0 8.100h10l-.6 1.200H.6z" fill="#8a949e"/><rect x="3" y="7.200" width="4" height=".9" fill="#6d7781"/></svg>
<div class="t b" style="left:501.7px;top:866.7px;font-size:10.5px;letter-spacing:-0.14px;color:#2a4a6b;">Software</div>
<div class="abs" style="left:561.4px;top:859.2px;width:74.3px;height:24.5px;border-radius:5px;background:#fff;border:1px solid #d2dfec"></div>
<svg class="abs" style="left:573.9px;top:866.3px" width="10" height="10" viewBox="0 0 10 10"><path d="M5 .4L9 1.600v3.200c0 2.500-1.900 4.200-4 4.800-2.100-.6-4-2.300-4-4.800V1.600z" fill="#2f7fe0"/><path d="M5 .4L1 1.600v3.200c0 2.500 1.900 4.200 4 4.800z" fill="#7db8f5"/></svg>
<div class="t b" style="left:588.6px;top:866.7px;font-size:10.5px;letter-spacing:-0.23px;color:#2a4a6b;">System</div>
<div class="abs" style="left:272.3px;top:894.4px;width:1357.5px;height:29.6px;background:#eff3f8"></div>
<div class="abs" style="left:272.3px;top:923.4px;width:1357.5px;height:1.8px;background:#b5dcf0"></div>
<div class="t b" style="left:282.0px;top:904.9px;font-size:9px;letter-spacing:0.21px;color:#129fd6;">EMPLOYEE</div>
<div class="t b" style="left:1137.1px;top:904.9px;font-size:9px;letter-spacing:0.56px;color:#129fd6;">DIVISION</div>
<div class="t b" style="left:1215.5px;top:904.9px;font-size:9px;letter-spacing:0.37px;color:#129fd6;">TYPE</div>
<div class="t b" style="left:1289.3px;top:904.9px;font-size:9px;letter-spacing:0.37px;color:#129fd6;">SEVERITY</div>
<div class="t b" style="left:1368.4px;top:904.9px;font-size:9px;letter-spacing:0.5px;color:#129fd6;">EVENTS</div>
<div class="t b" style="left:1427.7px;top:904.9px;font-size:9px;letter-spacing:0.31px;color:#129fd6;">SESSIONS</div>
<div class="t b" style="left:1496.4px;top:904.9px;font-size:9px;letter-spacing:0.32px;color:#129fd6;">LAST SEEN</div>
<div class="t b" style="left:1569.9px;top:904.9px;font-size:9px;letter-spacing:0.45px;color:#129fd6;">LOCATION</div>
<svg class="abs" style="left:1340px;top:905.500px" width="8" height="6.500" viewBox="0 0 8 6.500"><path d="M.3 .3h7.400L4 6.200z" fill="#1a9fd4"/></svg>
<div class="abs" style="left:272.3px;top:925.0px;width:1357.5px;height:83.0px;background:#eff3f8;border-bottom:1px solid #d5e3ee"></div>
<div class="t b" style="left:282.0px;top:936.3px;font-size:11.5px;letter-spacing:-0.1px;color:#16273b;">James Whitfield</div>
<div class="t" style="left:282.0px;top:951.9px;font-size:9.5px;letter-spacing:-0.02px;color:#8ea3b8;">Policy Advisor · EL2</div>
<div class="t" style="left:1137.1px;top:934.5px;font-size:11.5px;letter-spacing:-0.27px;color:#4f6680;">Strategy &amp;</div>
<div class="t" style="left:1137.1px;top:950.5px;font-size:11.5px;letter-spacing:-0.27px;color:#4f6680;">Policy</div>
<div class="abs tb" style="left:1215.3px;top:933.8px;width:52px"><span style="color:#7c5cbf;background:rgba(124,92,191,.13);border:1px solid rgba(124,92,191,.28)"><i class="e"><svg style="display:inline-block;vertical-align:-1px" width="9" height="9" viewBox="0 0 10 10"><rect x=".3" y="2.800" width="9.400" height="5.200" rx=".6" fill="#b9bdc3"/><path d="M1.300 4.200h7.400M1.300 5.400h7.400" stroke="#8f949b" stroke-width=".6" stroke-dasharray=".8 .5"/><path d="M2.800 6.800h4.400" stroke="#7d828a" stroke-width=".7"/></svg></i> Keyboard Keep-Alive</span></div>
<div class="abs" style="left:1289.3px;top:932.2px;width:42.4px;height:18.4px;border-radius:9.500px;background:rgba(212,32,42,.10);border:1px solid rgba(212,32,42,.30)"></div>
<div class="t b" style="left:1298.6px;top:936.6px;font-size:9.5px;letter-spacing:0.3px;color:#d4202a;">HIGH</div>
<div class="t b mono" style="left:1368.4px;top:936.4px;font-size:11.5px;letter-spacing:-0.3px;color:#0f2a47;">120</div>
<div class="t b mono" style="left:1427.7px;top:936.4px;font-size:11.5px;letter-spacing:-0.3px;color:#d4202a;">6</div>
<div class="t" style="left:1496.4px;top:934.5px;font-size:11.5px;letter-spacing:-0.5px;color:#4f6680;">1h ago</div>
<div class="t" style="left:1569.9px;top:934.5px;font-size:11.5px;letter-spacing:-0.7px;color:#4f6680;">SYD</div>
<div class="abs" style="left:272.3px;top:1008.0px;width:1357.5px;height:83.0px;background:#eff3f8;border-bottom:1px solid #d5e3ee"></div>
<div class="t b" style="left:282.0px;top:1019.3px;font-size:11.5px;letter-spacing:-0.1px;color:#16273b;">Nathan Ford</div>
<div class="t" style="left:282.0px;top:1034.9px;font-size:9.5px;letter-spacing:-0.02px;color:#8ea3b8;">Infrastructure Lead · EL1</div>
<div class="t" style="left:1137.1px;top:1017.5px;font-size:11.5px;letter-spacing:-0.27px;color:#4f6680;">Technology</div>
<div class="abs tb" style="left:1215.3px;top:1016.8px;width:52px"><span style="color:#7c5cbf;background:rgba(124,92,191,.13);border:1px solid rgba(124,92,191,.28)"><i class="e"><svg style="display:inline-block;vertical-align:-1px" width="9" height="9" viewBox="0 0 10 10"><rect x=".3" y="2.800" width="9.400" height="5.200" rx=".6" fill="#b9bdc3"/><path d="M1.300 4.200h7.400M1.300 5.400h7.400" stroke="#8f949b" stroke-width=".6" stroke-dasharray=".8 .5"/><path d="M2.800 6.800h4.400" stroke="#7d828a" stroke-width=".7"/></svg></i> Keyboard Keep-Alive</span></div>
<div class="abs" style="left:1289.3px;top:1015.2px;width:42.4px;height:18.4px;border-radius:9.500px;background:rgba(212,32,42,.10);border:1px solid rgba(212,32,42,.30)"></div>
<div class="t b" style="left:1298.6px;top:1019.6px;font-size:9.5px;letter-spacing:0.3px;color:#d4202a;">HIGH</div>
<div class="t b mono" style="left:1368.4px;top:1019.4px;font-size:11.5px;letter-spacing:-0.3px;color:#0f2a47;">120</div>
<div class="t b mono" style="left:1427.7px;top:1019.4px;font-size:11.5px;letter-spacing:-0.3px;color:#d4202a;">5</div>
<div class="t" style="left:1496.4px;top:1017.5px;font-size:11.5px;letter-spacing:-0.5px;color:#4f6680;">2h ago</div>
<div class="t" style="left:1569.9px;top:1017.5px;font-size:11.5px;letter-spacing:-0.7px;color:#4f6680;">CBR</div>
<div class="abs" style="left:272.3px;top:1091.0px;width:1357.5px;height:50.0px;background:#eff3f8;border-bottom:1px solid #d5e3ee"></div>
<div class="t b" style="left:282.0px;top:1102.3px;font-size:11.5px;letter-spacing:-0.1px;color:#16273b;">Lachlan Reid</div>
<div class="t" style="left:282.0px;top:1117.9px;font-size:9.5px;letter-spacing:-0.02px;color:#8ea3b8;">Senior Analyst · EL1</div>
<div class="t" style="left:1137.1px;top:1100.5px;font-size:11.5px;letter-spacing:-0.27px;color:#4f6680;">Strategy &amp;</div>
<div class="t" style="left:1137.1px;top:1116.5px;font-size:11.5px;letter-spacing:-0.27px;color:#4f6680;">Policy</div>
<div class="abs tb" style="left:1215.3px;top:1099.8px;width:60px"><span style="color:#1a9fd4;background:rgba(26,159,212,.13);border:1px solid rgba(26,159,212,.32)"><i class="e m"><svg style="display:inline-block;vertical-align:-1px" width="9" height="9" viewBox="0 0 10 10"><path d="M.3 3.600c1.200.5 2.200.1 2.800-1.300S4.800.2 6.400.5" fill="none" stroke="#1a9fd4" stroke-width=".9" stroke-linecap="round"/><path d="M4.400 4c0-2.300 1.100-3.400 2.700-3.400S9.800 1.700 9.800 4v3.300a.8.800 0 0 1-.8.800H5.200a.8.800 0 0 1-.8-.8z" fill="#1a9fd4"/><rect x="5.300" y="4.900" width="3.600" height="1.500" fill="#eef6fb"/></svg></i> Mouse Jiggler</span></div>
<div class="abs" style="left:1289.3px;top:1098.2px;width:42.4px;height:18.4px;border-radius:9.500px;background:rgba(212,32,42,.10);border:1px solid rgba(212,32,42,.30)"></div>
<div class="t b" style="left:1298.6px;top:1102.6px;font-size:9.5px;letter-spacing:0.3px;color:#d4202a;">HIGH</div>
<div class="t b mono" style="left:1368.4px;top:1102.4px;font-size:11.5px;letter-spacing:-0.3px;color:#0f2a47;">18</div>
<div class="t b mono" style="left:1427.7px;top:1102.4px;font-size:11.5px;letter-spacing:-0.3px;color:#d4202a;">7</div>
<div class="t" style="left:1496.4px;top:1100.5px;font-size:11.5px;letter-spacing:-0.5px;color:#4f6680;">2h ago</div>
<div class="t" style="left:1569.9px;top:1100.5px;font-size:11.5px;letter-spacing:-0.7px;color:#4f6680;">SYD</div>
<div class="abs" style="left:272.3px;top:1141.0px;width:1357.5px;height:89.0px;background:#eff3f8;border-bottom:1px solid #d5e3ee"></div>
<div class="t b" style="left:282.0px;top:1152.3px;font-size:11.5px;letter-spacing:-0.1px;color:#16273b;">Nicole Pham</div>
<div class="t" style="left:282.0px;top:1167.9px;font-size:9.5px;letter-spacing:-0.02px;color:#8ea3b8;">UX Designer · APS6</div>
<div class="t" style="left:1137.1px;top:1150.5px;font-size:11.5px;letter-spacing:-0.27px;color:#4f6680;">Digital</div>
<div class="t" style="left:1137.1px;top:1166.5px;font-size:11.5px;letter-spacing:-0.27px;color:#4f6680;">Services</div>
<div class="abs tb" style="left:1215.3px;top:1149.8px;width:52px"><span style="color:#e67e22;background:rgba(230,126,34,.12);border:1px solid rgba(230,126,34,.3)"><i class="e"><svg style="display:inline-block;vertical-align:-1px" width="9" height="9" viewBox="0 0 10 10"><rect x="1" y=".6" width="8" height="6.400" rx=".5" fill="#5b6670"/><rect x="1.600" y="1.200" width="6.800" height="5.200" fill="#3bc4f0"/><path d="M0 8.100h10l-.6 1.200H.6z" fill="#8a949e"/><rect x="3" y="7.200" width="4" height=".9" fill="#6d7781"/></svg></i> Software Evasion</span></div>
<div class="abs" style="left:1289.3px;top:1148.2px;width:42.4px;height:18.4px;border-radius:9.500px;background:rgba(212,32,42,.10);border:1px solid rgba(212,32,42,.30)"></div>
<div class="t b" style="left:1298.6px;top:1152.6px;font-size:9.5px;letter-spacing:0.3px;color:#d4202a;">HIGH</div>
<div class="t b mono" style="left:1368.4px;top:1152.4px;font-size:11.5px;letter-spacing:-0.3px;color:#0f2a47;">16</div>
<div class="t b mono" style="left:1427.7px;top:1152.4px;font-size:11.5px;letter-spacing:-0.3px;color:#d4202a;">5</div>
<div class="t" style="left:1496.4px;top:1150.5px;font-size:11.5px;letter-spacing:-0.5px;color:#4f6680;">3h ago</div>
<div class="t" style="left:1569.9px;top:1150.5px;font-size:11.5px;letter-spacing:-0.7px;color:#4f6680;">MEL</div>
<!--/MAINC-->
</div></div>
</body></html>
